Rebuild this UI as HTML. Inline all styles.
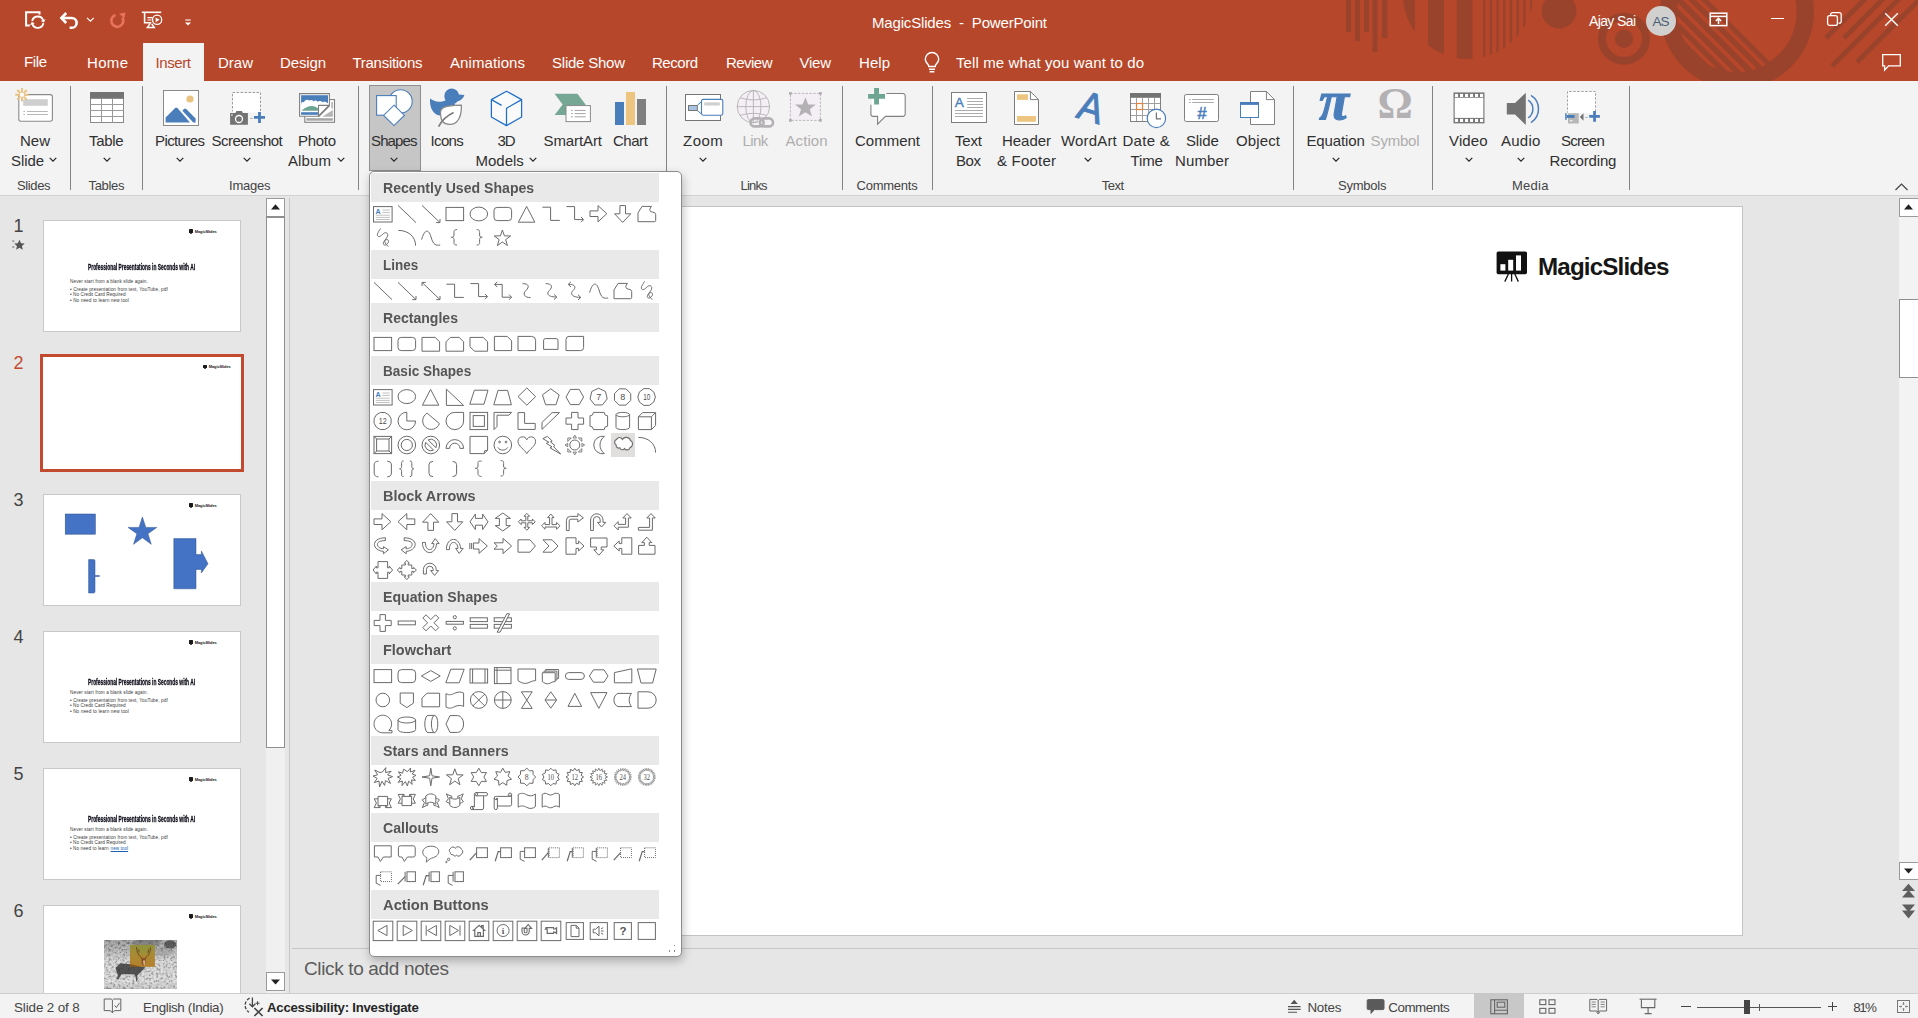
<!DOCTYPE html>
<html><head><meta charset="utf-8"><title>MagicSlides - PowerPoint</title>
<style>
html,body{margin:0;padding:0;}
body{width:1918px;height:1018px;overflow:hidden;position:relative;background:#e6e6e6;font-family:"Liberation Sans",sans-serif;}
#app{position:absolute;left:0;top:0;width:1918px;height:1018px;overflow:hidden;}
#app div,#app span,#app svg{position:absolute;}
#app span{white-space:pre;line-height:1;}
#app svg{overflow:visible;}
</style></head><body><div id="app">
<div style="left:0px;top:0px;width:1918px;height:81px;background:#b7472a;"></div>
<svg style="left:0;top:0;overflow:hidden" width="1918" height="81" viewBox="0 0 1918 81"><g fill="#9a432c"><rect x="1346" y="0" width="5" height="32"/><rect x="1355" y="0" width="5" height="41"/><rect x="1364" y="0" width="5" height="32"/><rect x="1372.5" y="0" width="5" height="52"/><rect x="1382" y="0" width="5.5" height="38"/><clipPath id="cc"><circle cx="1468" cy="-6.3" r="65.3"/></clipPath><g clip-path="url(#cc)"><rect x="1403" y="0" width="12" height="70"/><rect x="1428" y="0" width="16" height="70"/><rect x="1456.7" y="0" width="15.799999999999955" height="70"/><rect x="1483.0" y="0" width="2.4" height="70"/><rect x="1489.7" y="0" width="2.4" height="70"/><rect x="1496.4" y="0" width="2.4" height="70"/><rect x="1503.1" y="0" width="2.4" height="70"/><rect x="1509.8" y="0" width="2.4" height="70"/><rect x="1516.5" y="0" width="2.4" height="70"/><rect x="1523.2" y="0" width="2.4" height="70"/><rect x="1529.9" y="0" width="2.4" height="70"/></g><circle cx="1559" cy="11" r="17.5"/><circle cx="1624" cy="38.7" r="22" fill="none" stroke="#9a432c" stroke-width="8"/><circle cx="1624" cy="38.7" r="9.2"/><circle cx="1737" cy="12" r="68.25" fill="none" stroke="#9a432c" stroke-width="17.5"/><clipPath id="c2"><circle cx="1737" cy="12" r="60"/></clipPath><g clip-path="url(#c2)"><path d="M1600 -108 L1788 80 L1600 80Z"/><g stroke="#b7472a" stroke-width="3.8" fill="none"><line x1="1678.4" y1="-20" x2="1798.4" y2="100"/><line x1="1665.6" y1="-20" x2="1785.6" y2="100"/><line x1="1652" y1="-20" x2="1772" y2="100"/><line x1="1638.8" y1="-20" x2="1758.8" y2="100"/><line x1="1626" y1="-20" x2="1746" y2="100"/></g></g><g stroke="#9a432c" stroke-width="5" fill="none"><line x1="1826" y1="38" x2="1870" y2="-6"/><line x1="1844" y1="38" x2="1888" y2="-6"/><line x1="1832" y1="66" x2="1918" y2="-20"/><line x1="1857" y1="62" x2="1930" y2="-11"/></g></g></svg>
<div style="left:0px;top:81px;width:1918px;height:114px;background:#f3f3f3;"></div>
<div style="left:0px;top:195px;width:1918px;height:1px;background:#d2d2d2;"></div>
<div style="left:143px;top:43px;width:61px;height:38px;background:#f3f3f3;"></div>
<span style="left:872.00px;top:14.60px;font-size:15px;color:#ffffff;letter-spacing:-0.170px;">MagicSlides  -  PowerPoint</span>
<span style="left:24.00px;top:54.30px;font-size:15px;color:#ffffff;letter-spacing:-0.390px;">File</span>
<span style="left:87.00px;top:55.10px;font-size:15px;color:#ffffff;letter-spacing:0.329px;">Home</span>
<span style="left:218.00px;top:55.10px;font-size:15px;color:#ffffff;letter-spacing:-0.001px;">Draw</span>
<span style="left:280.00px;top:55.10px;font-size:15px;color:#ffffff;letter-spacing:-0.139px;">Design</span>
<span style="left:352.50px;top:55.10px;font-size:15px;color:#ffffff;letter-spacing:-0.281px;">Transitions</span>
<span style="left:450.00px;top:55.10px;font-size:15px;color:#ffffff;letter-spacing:0.088px;">Animations</span>
<span style="left:552.00px;top:55.10px;font-size:15px;color:#ffffff;letter-spacing:-0.227px;">Slide Show</span>
<span style="left:652.00px;top:55.10px;font-size:15px;color:#ffffff;letter-spacing:-0.471px;">Record</span>
<span style="left:726.00px;top:55.10px;font-size:15px;color:#ffffff;letter-spacing:-0.537px;">Review</span>
<span style="left:799.50px;top:55.10px;font-size:15px;color:#ffffff;letter-spacing:-0.248px;">View</span>
<span style="left:859.00px;top:55.10px;font-size:15px;color:#ffffff;letter-spacing:0.050px;">Help</span>
<span style="left:155.60px;top:55.10px;font-size:15px;color:#b7472a;letter-spacing:-0.423px;">Insert</span>
<span style="left:956.00px;top:55.10px;font-size:15px;color:#ffffff;letter-spacing:0.112px;">Tell me what you want to do</span>
<svg style="left:922px;top:51px;" width="20" height="24" viewBox="0 0 20 24"><g fill="none" stroke="#fff" stroke-width="1.4"><path d="M6.8 15.5 C6.8 13 3.3 11.8 3.3 8.2 A6.7 6.7 0 0 1 16.7 8.2 C16.7 11.8 13.2 13 13.2 15.5 Z"/><path d="M7 18.3h6M7.6 20.8h4.8"/></g></svg>
<span style="left:1589.00px;top:14.15px;font-size:14px;color:#ffffff;letter-spacing:-0.623px;">Ajay Sai</span>
<div style="left:1646px;top:6px;width:30px;height:30px;border-radius:50%;background:#d2d0ce"></div>
<span style="left:1652.50px;top:14.77px;font-size:13.5px;color:#4b5e78;letter-spacing:-1.010px;">AS</span>
<svg style="left:1709px;top:12px;" width="20" height="15" viewBox="0 0 20 15"><g fill="none" stroke="#fff" stroke-width="1.5"><rect x="1.2" y="1.2" width="16.6" height="12.4"/><path d="M1.2 4.4h16.6"/><path d="M9.5 12V6.6M6.8 9l2.7-2.6L12.2 9"/></g></svg>
<div style="left:1771px;top:17.5px;width:12.5px;height:1.3px;background:#fff;"></div>
<svg style="left:1826px;top:11px;" width="17" height="16" viewBox="0 0 17 16"><g fill="none" stroke="#fff" stroke-width="1.3"><rect x="1.6" y="4.6" width="9.8" height="9.8" rx="2"/><path d="M4.6 4.4V3.6a2 2 0 0 1 2-2h6.6a2 2 0 0 1 2 2v6.6a2 2 0 0 1-2 2h-.8"/></g></svg>
<svg style="left:1884px;top:12px;" width="16" height="16" viewBox="0 0 16 16"><path d="M1.2 1.2L13.8 13.8M13.8 1.2L1.2 13.8" stroke="#fff" stroke-width="1.4" fill="none"/></svg>
<svg style="left:1881px;top:53px;" width="22" height="20" viewBox="0 0 22 20"><path d="M1.7 1.7H19.3V12.8H7.6L3.6 17V12.8H1.7Z" fill="none" stroke="#fff" stroke-width="1.3" stroke-linejoin="miter"/></svg>
<svg style="left:23px;top:9px;" width="24" height="22" viewBox="0 0 24 22"><g fill="none" stroke="#fff" stroke-width="2"><path d="M6.8 16.6H3.1V3.2H16.5V5.6"/><path d="M9.19 12.21A5.7 5.7 0 0 1 20.16 11.25M20.41 14.19A5.7 5.7 0 0 1 9.44 15.15" stroke-width="1.9"/></g><path d="M20.9 13.5L22.6 10.2L17.7 12.1ZM8.7 12.9L7 16.2L11.9 14.3Z" fill="#fff"/></svg>
<svg style="left:59px;top:11px;" width="22" height="19" viewBox="0 0 22 19"><g fill="none" stroke="#fff" stroke-width="2.6" stroke-linejoin="miter"><path d="M7.2 2L2.4 7L7.2 12"/><path d="M3 7H12.7A4.9 4.9 0 0 1 12.7 16.8H10.6"/></g></svg>
<svg style="left:86px;top:16px;" width="9" height="8" viewBox="0 0 9 8"><path d="M1 1.8L4.4 5.2L7.8 1.8" fill="none" stroke="#fff" stroke-width="1.2"/></svg>
<svg style="left:108px;top:11px;" width="18" height="19" viewBox="0 0 18 19"><g fill="none" stroke="#e8735c" stroke-width="2.7"><path d="M7.6 4A6 6 0 1 0 14.4 6.6"/></g><path d="M11 2.7L17.4 1.4L16.4 7.6Z" fill="#e8735c"/></svg>
<svg style="left:141px;top:11px;" width="23" height="21" viewBox="0 0 23 21"><g fill="none" stroke="#fff" stroke-width="1.6"><path d="M0.8 1.3H20.2"/><path d="M3.6 1.6V11.8H10.4"/><path d="M6.4 6.6h5M6.4 9h4" stroke-width="1.2"/><circle cx="16.1" cy="8.8" r="4.6" stroke-width="1.3"/><path d="M9.2 12.4L6.4 16.4H13.2L10.8 13" stroke-width="1.5"/></g><path d="M14.6 6.4L18.6 8.8L14.6 11.2Z" fill="#fff"/></svg>
<svg style="left:184px;top:19px;" width="8" height="8" viewBox="0 0 8 8"><path d="M1.3 1h5.4" stroke="#fff" stroke-width="1.1"/><path d="M1 3.4h6L4 6.6Z" fill="#fff"/></svg>
<div style="left:70px;top:86px;width:1px;height:104px;background:#838383;"></div>
<div style="left:142px;top:86px;width:1px;height:104px;background:#838383;"></div>
<div style="left:358px;top:86px;width:1px;height:104px;background:#838383;"></div>
<div style="left:666px;top:86px;width:1px;height:104px;background:#838383;"></div>
<div style="left:842px;top:86px;width:1px;height:104px;background:#838383;"></div>
<div style="left:932px;top:86px;width:1px;height:104px;background:#838383;"></div>
<div style="left:1293px;top:86px;width:1px;height:104px;background:#838383;"></div>
<div style="left:1432px;top:86px;width:1px;height:104px;background:#838383;"></div>
<div style="left:1629px;top:86px;width:1px;height:104px;background:#838383;"></div>
<div style="left:369px;top:84.5px;width:52px;height:86.5px;background:#c6c6c6;box-sizing:border-box;border:1px solid #8f8f8f;"></div>
<span style="left:20.00px;top:132.90px;font-size:15px;color:#303030;letter-spacing:-0.004px;">New</span>
<span style="left:11.00px;top:152.90px;font-size:15px;color:#303030;letter-spacing:-0.089px;">Slide</span>
<svg style="left:48.5px;top:157px;" width="8" height="6" viewBox="0 0 8 6"><path d="M0.7 0.9L4 4.2L7.3 0.9" fill="none" stroke="#262626" stroke-width="1.25"/></svg>
<span style="left:89.00px;top:132.90px;font-size:15px;color:#303030;letter-spacing:-0.290px;">Table</span>
<svg style="left:102.5px;top:157px;" width="8" height="6" viewBox="0 0 8 6"><path d="M0.7 0.9L4 4.2L7.3 0.9" fill="none" stroke="#262626" stroke-width="1.25"/></svg>
<span style="left:155.00px;top:132.90px;font-size:15px;color:#303030;letter-spacing:-0.598px;">Pictures</span>
<svg style="left:176px;top:157px;" width="8" height="6" viewBox="0 0 8 6"><path d="M0.7 0.9L4 4.2L7.3 0.9" fill="none" stroke="#262626" stroke-width="1.25"/></svg>
<span style="left:211.50px;top:132.90px;font-size:15px;color:#303030;letter-spacing:-0.520px;">Screenshot</span>
<svg style="left:243px;top:157px;" width="8" height="6" viewBox="0 0 8 6"><path d="M0.7 0.9L4 4.2L7.3 0.9" fill="none" stroke="#262626" stroke-width="1.25"/></svg>
<span style="left:298.00px;top:132.90px;font-size:15px;color:#303030;letter-spacing:-0.300px;">Photo</span>
<span style="left:288.00px;top:152.90px;font-size:15px;color:#303030;letter-spacing:0.120px;">Album</span>
<svg style="left:336.5px;top:157px;" width="8" height="6" viewBox="0 0 8 6"><path d="M0.7 0.9L4 4.2L7.3 0.9" fill="none" stroke="#262626" stroke-width="1.25"/></svg>
<span style="left:371.00px;top:132.90px;font-size:15px;color:#303030;letter-spacing:-0.875px;">Shapes</span>
<svg style="left:390px;top:157px;" width="8" height="6" viewBox="0 0 8 6"><path d="M0.7 0.9L4 4.2L7.3 0.9" fill="none" stroke="#262626" stroke-width="1.25"/></svg>
<span style="left:430.60px;top:132.90px;font-size:15px;color:#303030;letter-spacing:-0.663px;">Icons</span>
<span style="left:497.50px;top:132.90px;font-size:15px;color:#303030;letter-spacing:-1.075px;">3D</span>
<span style="left:475.60px;top:152.90px;font-size:15px;color:#303030;letter-spacing:-0.031px;">Models</span>
<svg style="left:528.5px;top:157px;" width="8" height="6" viewBox="0 0 8 6"><path d="M0.7 0.9L4 4.2L7.3 0.9" fill="none" stroke="#262626" stroke-width="1.25"/></svg>
<span style="left:543.50px;top:132.90px;font-size:15px;color:#303030;letter-spacing:-0.096px;">SmartArt</span>
<span style="left:613.00px;top:132.90px;font-size:15px;color:#303030;letter-spacing:-0.470px;">Chart</span>
<span style="left:683.00px;top:132.90px;font-size:15px;color:#303030;letter-spacing:0.485px;">Zoom</span>
<svg style="left:698.5px;top:157px;" width="8" height="6" viewBox="0 0 8 6"><path d="M0.7 0.9L4 4.2L7.3 0.9" fill="none" stroke="#262626" stroke-width="1.25"/></svg>
<span style="left:742.50px;top:132.90px;font-size:15px;color:#b0aeae;letter-spacing:-0.573px;">Link</span>
<span style="left:785.50px;top:132.90px;font-size:15px;color:#b0aeae;letter-spacing:0.082px;">Action</span>
<span style="left:855.00px;top:132.90px;font-size:15px;color:#303030;letter-spacing:-0.003px;">Comment</span>
<span style="left:955.00px;top:132.90px;font-size:15px;color:#303030;letter-spacing:-0.170px;">Text</span>
<span style="left:956.00px;top:152.90px;font-size:15px;color:#303030;letter-spacing:-0.424px;">Box</span>
<span style="left:1002.00px;top:132.90px;font-size:15px;color:#303030;letter-spacing:-0.040px;">Header</span>
<span style="left:997.00px;top:152.90px;font-size:15px;color:#303030;letter-spacing:0.211px;">&amp; Footer</span>
<span style="left:1061.00px;top:132.90px;font-size:15px;color:#303030;letter-spacing:0.161px;">WordArt</span>
<svg style="left:1084px;top:157px;" width="8" height="6" viewBox="0 0 8 6"><path d="M0.7 0.9L4 4.2L7.3 0.9" fill="none" stroke="#262626" stroke-width="1.25"/></svg>
<span style="left:1122.50px;top:132.90px;font-size:15px;color:#303030;letter-spacing:0.288px;">Date &amp;</span>
<span style="left:1130.60px;top:152.90px;font-size:15px;color:#303030;letter-spacing:-0.192px;">Time</span>
<span style="left:1186.00px;top:132.90px;font-size:15px;color:#303030;letter-spacing:-0.139px;">Slide</span>
<span style="left:1175.00px;top:152.90px;font-size:15px;color:#303030;letter-spacing:0.130px;">Number</span>
<span style="left:1236.00px;top:132.90px;font-size:15px;color:#303030;letter-spacing:0.130px;">Object</span>
<span style="left:1306.40px;top:132.90px;font-size:15px;color:#303030;letter-spacing:-0.117px;">Equation</span>
<svg style="left:1331.5px;top:157px;" width="8" height="6" viewBox="0 0 8 6"><path d="M0.7 0.9L4 4.2L7.3 0.9" fill="none" stroke="#262626" stroke-width="1.25"/></svg>
<span style="left:1370.60px;top:132.90px;font-size:15px;color:#b0aeae;letter-spacing:-0.204px;">Symbol</span>
<span style="left:1449.00px;top:132.90px;font-size:15px;color:#303030;letter-spacing:0.151px;">Video</span>
<svg style="left:1464.5px;top:157px;" width="8" height="6" viewBox="0 0 8 6"><path d="M0.7 0.9L4 4.2L7.3 0.9" fill="none" stroke="#262626" stroke-width="1.25"/></svg>
<span style="left:1501.00px;top:132.90px;font-size:15px;color:#303030;letter-spacing:0.258px;">Audio</span>
<svg style="left:1516.5px;top:157px;" width="8" height="6" viewBox="0 0 8 6"><path d="M0.7 0.9L4 4.2L7.3 0.9" fill="none" stroke="#262626" stroke-width="1.25"/></svg>
<span style="left:1561.00px;top:132.90px;font-size:15px;color:#303030;letter-spacing:-0.746px;">Screen</span>
<span style="left:1549.50px;top:152.90px;font-size:15px;color:#303030;letter-spacing:-0.184px;">Recording</span>
<span style="left:17.00px;top:178.80px;font-size:13px;color:#444444;letter-spacing:-0.362px;">Slides</span>
<span style="left:88.50px;top:178.80px;font-size:13px;color:#444444;letter-spacing:-0.316px;">Tables</span>
<span style="left:229.00px;top:178.80px;font-size:13px;color:#444444;letter-spacing:-0.206px;">Images</span>
<span style="left:740.60px;top:178.80px;font-size:13px;color:#444444;letter-spacing:-0.837px;">Links</span>
<span style="left:856.60px;top:178.80px;font-size:13px;color:#444444;letter-spacing:-0.250px;">Comments</span>
<span style="left:1101.70px;top:178.80px;font-size:13px;color:#444444;letter-spacing:-0.514px;">Text</span>
<span style="left:1338.00px;top:178.80px;font-size:13px;color:#444444;letter-spacing:-0.225px;">Symbols</span>
<span style="left:1512.00px;top:178.80px;font-size:13px;color:#444444;letter-spacing:0.273px;">Media</span>
<svg style="left:1894px;top:182px;" width="15" height="10" viewBox="0 0 15 10"><path d="M1.5 8L7.5 2L13.5 8" fill="none" stroke="#444" stroke-width="1.2"/></svg>
<svg style="left:12px;top:86px;" width="44" height="38" viewBox="0 0 44 38"><rect x="6.8" y="8.6" width="33.6" height="26.6" rx="2.2" fill="#fff" stroke="#8a8a8a" stroke-width="1.1"/>
<rect x="11.2" y="13.2" width="24.6" height="6.6" fill="#cfcfcf"/>
<path d="M11.4 25.5h1.6M15 25.5h20.8M11.4 28.5h1.6M15 28.5h20.8" stroke="#b0b0b0" stroke-width="0.9"/>
<g stroke="#eac282" stroke-width="1.9"><path d="M10 2v13.6M3.2 8.8h13.6M5.2 4l9.6 9.6M14.8 4L5.2 13.6"/></g><circle cx="10" cy="8.8" r="2.2" fill="#fbfbfb"/></svg>
<svg style="left:90px;top:92px;" width="34" height="31" viewBox="0 0 34 31"><rect x="0.5" y="0.5" width="33" height="30" fill="#fff" stroke="#8a8a8a"/><rect x="0" y="0" width="34" height="6.8" fill="#737373"/>
<path d="M0.5 12.5h33M0.5 18.5h33M0.5 24.5h33M11.5 7v23.5M22.5 7v23.5" stroke="#9a9a9a" stroke-width="1"/></svg>
<svg style="left:163px;top:90px;" width="36" height="36" viewBox="0 0 36 36"><rect x="0.5" y="0.5" width="35" height="35" fill="#fff" stroke="#8a8a8a"/><circle cx="27" cy="9" r="3.6" fill="#eac282"/>
<path d="M2.6 32.6V27.4L12.4 17.8L14.2 17.8L27 32.6Z" fill="#4a7ebb"/><path d="M19.4 20.8L21.2 18.8L23 18.8L32.6 28.4V32.6H30.2Z" fill="#4a7ebb"/></svg>
<svg style="left:229px;top:91px;" width="38" height="35" viewBox="0 0 38 35"><rect x="3.5" y="1.5" width="28" height="20" fill="#fff"/><path d="M3.5 20.4V1.5H31.5V20.4" fill="none" stroke="#9c9c9c" stroke-width="1" stroke-dasharray="2.4 1.6" stroke-dashoffset="1"/>
<path d="M1.1 22H6.4L7.4 20H12.9L13.9 22H18.9V33.8H1.1Z" fill="#737373"/><circle cx="10" cy="28" r="3.5" fill="#737373" stroke="#fff" stroke-width="1.3"/><rect x="2.3" y="23.3" width="1.3" height="1.3" fill="#fff"/>
<path d="M21.2 27.4h2.8" stroke="#a8a8a8" stroke-width="0.9"/><path d="M30.5 21v10.9M25 26.45h11" stroke="#4a7ebb" stroke-width="2.8"/></svg>
<svg style="left:298px;top:92px;" width="38" height="32" viewBox="0 0 38 32"><rect x="6.8" y="7.6" width="29.7" height="22.7" fill="#fff" stroke="#808080" stroke-width="1.1"/>
<rect x="8.3" y="26.2" width="26.6" height="2.5" fill="#a6a6a6"/><rect x="33.3" y="10" width="1.6" height="6.5" fill="#b4b4b4"/><path d="M24.2 24.7L34.9 18.1V24.7Z" fill="#b4b4b4"/>
<path d="M1.6 1.6H31.4V13.4L20.5 24.3H1.6Z" fill="#fff" stroke="#808080" stroke-width="1.1"/><rect x="3.1" y="3.2" width="26.9" height="9.8" fill="#4a7ebb"/>
<path d="M3.1 11.4C4 9.6 5.4 9.8 6 10.4C6.6 7.6 9.6 6.8 11.4 8.6C12.6 7.6 14.6 7.8 15.4 9.4C16.4 8.2 18.6 8.2 19.4 9.8C21 8.6 23.4 8.8 24.4 10.2C26 9.4 28.6 9.6 30 11.4V13.4H3.1Z" fill="#fff"/>
<path d="M3.3 18.7C6.6 16 10.6 14 13.6 14C16.4 14 18.6 15.4 20.4 16.6V18.7Z" fill="#6ea592"/><rect x="3.1" y="20.2" width="17.2" height="2.6" fill="#4a7ebb"/>
<path d="M20.5 24.3V13.4H31.4Z" fill="#fff" stroke="#808080" stroke-width="1.1" stroke-linejoin="round"/><path d="M31.2 13.6L20.7 24.1" stroke="#808080" stroke-width="1.5"/></svg>
<svg style="left:375px;top:88px;" width="40" height="40" viewBox="0 0 40 40"><circle cx="25.6" cy="13.4" r="11.6" fill="#fff" stroke="#4a7ebb" stroke-width="1.1"/>
<rect x="1.6" y="7.6" width="19.6" height="19.6" fill="#fff" stroke="#4a7ebb" stroke-width="1.1"/>
<path d="M19 17.2L29.4 27.4L19 37.6L8.6 27.4Z" fill="#fff" stroke="#4a7ebb" stroke-width="1.1"/></svg>
<svg style="left:428px;top:88px;" width="38" height="40" viewBox="0 0 38 40"><path d="M2 10.6C6.4 14.2 12.4 14.6 17.6 12.2C16.6 10.8 16.4 9.2 16.4 7.66A7.3 7.3 0 0 1 30.9 6.6L36.4 7C35.8 10 33 12.4 29.4 13.4C28.4 14.6 27.4 15.4 26.4 15.8L27.4 17.4C20 18.6 14 20 12.6 27.6C6 27.4 1.4 21 2 10.6Z" fill="#4a7ebb"/>
<path d="M33.4 17.2C33.6 24 32 30.6 28.5 34C26.4 36 24 36.6 21.5 36.4C18.6 36.2 16.2 35.4 15 34C13.4 32.4 12.6 30 12.5 24.2C12.6 21.8 14 20.2 16.1 19.3C20 17.8 27 17.4 33.4 17.2Z" fill="#fff" stroke="#8a8a8a" stroke-width="1.3" stroke-linejoin="round"/>
<path d="M25.6 24.5C19 27.6 14 32 10.6 38.6" fill="none" stroke="#7c7c7c" stroke-width="1.7"/></svg>
<svg style="left:490px;top:90px;" width="33" height="37" viewBox="0 0 33 37"><g fill="#fafafa" stroke="#1e6fc9" stroke-width="1.25" stroke-linejoin="round"><path d="M16.5 1.2L31.6 9.6V27L16.5 35.6L1.4 27V9.6Z"/><path d="M31.6 9.6L16.5 18.2V35.6M1.4 9.6L11.6 15.4" fill="none"/></g></svg>
<svg style="left:554px;top:93px;" width="38" height="30" viewBox="0 0 38 30"><path d="M0.6 0.8H23.4L31.6 11.4L23.4 22H0.6L8.6 11.4Z" fill="#75a794"/>
<rect x="12" y="12.6" width="24.4" height="16" fill="#fff" stroke="#8a8a8a" stroke-width="1"/><path d="M17 17.4h1.8M20.6 17.4h11M17 20.6h1.8M20.6 20.6h11M17 23.8h1.8M20.6 23.8h11" stroke="#9a9a9a" stroke-width="0.9"/></svg>
<div style="left:614.7px;top:102px;width:9px;height:22.7px;background:#4a7ebb;"></div>
<div style="left:625.7px;top:92px;width:9px;height:32.7px;background:#edc581;"></div>
<div style="left:636.9px;top:99px;width:8.8px;height:25.7px;background:#7f7f7f;"></div>
<svg style="left:684px;top:93px;" width="40" height="29" viewBox="0 0 40 29"><rect x="1.5" y="1.5" width="35" height="26" fill="#fff" stroke="#757575" stroke-width="1"/>
<path d="M13.3 12.3L17.5 8.6M13.3 17.5L17.5 21" stroke="#4a7ebb" stroke-width="1"/><rect x="4.5" y="12.5" width="8.8" height="5" fill="#a9c4e4" stroke="#757575" stroke-width="1"/>
<rect x="17.5" y="6.4" width="21.3" height="15.8" rx="1.6" fill="#fff" stroke="#4a7ebb" stroke-width="1.1"/><rect x="20.2" y="9.4" width="15.6" height="3.1" fill="#cfcfcf"/></svg>
<svg style="left:736px;top:89px;" width="40" height="40" viewBox="0 0 40 40"><g fill="#f4eff4" stroke="#b4b1b4" stroke-width="0.9"><circle cx="17.4" cy="17.6" r="16.2"/><ellipse cx="17.4" cy="17.6" rx="7.6" ry="16.2" fill="none"/><path d="M17.4 1.4v32.4M1.2 17.6h32.4M4 8.6C12 11.6 23 11.6 30.8 8.6M4 26.6C12 23.6 23 23.6 30.8 26.6" fill="none"/></g>
<g fill="none" stroke="#b4b1b4" stroke-width="2.6"><rect x="14.6" y="29.4" width="13" height="8" rx="4"/><rect x="24" y="29.4" width="13" height="8" rx="4"/></g></svg>
<svg style="left:788px;top:91px;" width="35" height="32" viewBox="0 0 35 32"><rect x="2.4" y="2.4" width="30" height="27" fill="#f4eff4" stroke="#b4b1b4" stroke-width="0.9" stroke-dasharray="2.4 1.4"/>
<g fill="#b4b1b4"><rect x="1" y="1" width="2.8" height="2.8"/><rect x="31" y="1" width="2.8" height="2.8"/><rect x="1" y="28" width="2.8" height="2.8"/><rect x="31" y="28" width="2.8" height="2.8"/>
<path d="M17.4 6.2L20.2 13.6H27.8L21.8 18.2L24 25.6L17.4 21.2L10.8 25.6L13 18.2L7 13.6H14.6Z"/></g></svg>
<svg style="left:866px;top:86px;" width="42" height="40" viewBox="0 0 42 40"><path d="M4.9 9.9A2.4 2.4 0 0 1 7.3 7.5H36.8A2.4 2.4 0 0 1 39.2 9.9V28A2.4 2.4 0 0 1 36.8 30.4H19.4L11.6 38.2V30.4H7.3A2.4 2.4 0 0 1 4.9 28Z" fill="#fff" stroke="#808080" stroke-width="1.1"/>
<path d="M4.9 18.8V7.5H20.4" fill="none" stroke="#f3f3f3" stroke-width="2.4"/><rect x="6.1" y="8.7" width="14.3" height="10.1" fill="#fff"/>
<path d="M10.55 2.1v16.5M2.1 10.35h16.9" stroke="#6ea592" stroke-width="4.9"/></svg>
<svg style="left:950px;top:91px;" width="38" height="32" viewBox="0 0 38 32"><rect x="1.5" y="1.5" width="35" height="30" fill="#fff" stroke="#7d7d7d" stroke-width="1"/>
<path d="M17.2 7.5h15.8M17.2 10.5h15.8M17.2 13.5h15.8M17.2 16.5h15.8M5 19.5h28M5 22.5h28M5 25.5h28" stroke="#a0a0a0" stroke-width="0.9"/></svg>
<span style="left:954.80px;top:96.49px;font-size:13.6px;color:#4a7ebb;letter-spacing:0.528px;-webkit-text-stroke:0.35px #4a7ebb;">A</span>
<svg style="left:1013px;top:90px;" width="27" height="36" viewBox="0 0 27 36"><path d="M1.5 1.5H17.4L25.5 9.6V34.5H1.5Z" fill="#fff" stroke="#7d7d7d" stroke-width="1"/><path d="M17.4 1.5V9.6H25.5" fill="none" stroke="#7d7d7d" stroke-width="1"/>
<rect x="4" y="4.3" width="11" height="5.6" fill="#edc581"/><rect x="4" y="26" width="18.9" height="5.8" fill="#edc581"/></svg>
<span style="left:1075.7px;top:87.1px;font-size:41px;color:#4a7ebb;-webkit-text-stroke:1px #4a7ebb;transform:rotate(17deg) scaleX(0.92);transform-origin:50% 60%;">A</span>
<svg style="left:1129px;top:92px;" width="38" height="37" viewBox="0 0 38 37"><rect x="1.5" y="1.5" width="30" height="28" fill="#fff" stroke="#808080" stroke-width="1"/><rect x="1" y="1" width="31" height="4.8" fill="#737373"/>
<path d="M2 11.5h29M2 17.5h29M2 23.5h29M7.5 6v23M13.5 6v23M19.5 6v23M25.5 6v23" stroke="#a0a0a0" stroke-width="1"/>
<rect x="7.5" y="11.5" width="6" height="6" fill="#fff" stroke="#e8823a" stroke-width="1.2"/>
<circle cx="27.4" cy="26.4" r="9.2" fill="#fff" stroke="#4a7ebb" stroke-width="1.2"/><path d="M27.4 20.6V26.9H32" fill="none" stroke="#737373" stroke-width="1.2"/></svg>
<svg style="left:1183px;top:93px;" width="37" height="30" viewBox="0 0 37 30"><rect x="1.5" y="1.5" width="34" height="27" rx="1.8" fill="#fff" stroke="#808080" stroke-width="1"/><path d="M6 6.5h1.8M9.2 6.5h21.6M6 9.5h1.8M9.2 9.5h21.6" stroke="#a0a0a0" stroke-width="0.9"/></svg>
<span style="left:1197.20px;top:105.00px;font-size:16.3px;color:#4a7ebb;letter-spacing:1.334px;font-style:italic;-webkit-text-stroke:0.5px #4a7ebb;">#</span>
<svg style="left:1239px;top:90px;" width="37" height="36" viewBox="0 0 37 36"><path d="M11.5 1.5H27.4L35.5 9.6V34.5H11.5Z" fill="#fff" stroke="#808080" stroke-width="1"/><path d="M27.4 1.5V9.6H35.5" fill="none" stroke="#808080" stroke-width="1"/>
<rect x="1.5" y="12.5" width="18" height="15" fill="#fff" stroke="#4a7ebb" stroke-width="1"/><rect x="1" y="12" width="19" height="2.9" fill="#4a7ebb"/></svg>
<span style="left:1319px;top:72.8px;font-family:'Liberation Serif',serif;font-style:italic;font-weight:bold;font-size:55px;color:#4a7ebb;-webkit-text-stroke:1.1px #4a7ebb;">π</span>
<span style="left:1377.5px;top:81.8px;font-family:'Liberation Serif',serif;font-size:44px;font-weight:bold;color:#b4b1b4;">Ω</span>
<svg style="left:1453px;top:92px;" width="32" height="32" viewBox="0 0 32 32"><rect x="1.1" y="1" width="29.8" height="29.8" fill="#fff" stroke="#737373" stroke-width="1.1"/><rect x="1.1" y="1" width="29.8" height="4.7" fill="#737373"/><rect x="1.1" y="25.9" width="29.8" height="4.9" fill="#737373"/>
<g fill="#fff"><rect x="2.00" y="1.9" width="3.1" height="3.1"/><rect x="2.00" y="26.9" width="3.1" height="3.1"/><rect x="7.00" y="1.9" width="3.1" height="3.1"/><rect x="7.00" y="26.9" width="3.1" height="3.1"/><rect x="12.00" y="1.9" width="3.1" height="3.1"/><rect x="12.00" y="26.9" width="3.1" height="3.1"/><rect x="17.00" y="1.9" width="3.1" height="3.1"/><rect x="17.00" y="26.9" width="3.1" height="3.1"/><rect x="22.00" y="1.9" width="3.1" height="3.1"/><rect x="22.00" y="26.9" width="3.1" height="3.1"/><rect x="27.00" y="1.9" width="3.1" height="3.1"/><rect x="27.00" y="26.9" width="3.1" height="3.1"/></g></svg>
<svg style="left:1505px;top:92px;" width="36" height="34" viewBox="0 0 36 34"><path d="M1.8 10.9H10L20.8 0.75V32.9L10 22.6H1.8Z" fill="#737373"/><path d="M23.2 8.1A10.8 10.8 0 0 1 23.2 25.9M26 3.4A16.1 16.1 0 0 1 26 30.6" fill="none" stroke="#4a7ebb" stroke-width="1.5"/></svg>
<svg style="left:1564px;top:90px;" width="38" height="35" viewBox="0 0 38 35"><rect x="3.5" y="1.5" width="28" height="21.6" fill="#fff"/><path d="M3.5 22.7V1.5H31.5V22.7" fill="none" stroke="#a2a2a2" stroke-width="1" stroke-dasharray="2.4 1.6" stroke-dashoffset="1"/>
<rect x="4" y="23.2" width="10.8" height="10.3" fill="#b7b7b7"/><rect x="1.2" y="23.2" width="1.5" height="6.6" fill="#4a7ebb"/><rect x="2.6" y="25" width="8" height="2.9" fill="#4a7ebb"/><rect x="6" y="30.2" width="2.4" height="1" fill="#fff"/>
<path d="M15.8 27L19.5 23.2V30.7Z" fill="#737373"/><path d="M21.2 27.4h2.5" stroke="#a8a8a8" stroke-width="0.9"/><path d="M30.55 21.1v10.7M25.2 26.45h10.7" stroke="#4a7ebb" stroke-width="2.8"/></svg>
<div style="left:43px;top:220px;width:198px;height:112px;background:#fff;box-sizing:border-box;border:1px solid #c8c8c8;"></div>
<span style="left:13.5px;top:216.8px;font-size:18px;color:#444;">1</span>
<div style="left:188.79999999999998px;top:229.3px;width:4.4px;height:3.6px;background:#1a1a1a;border-radius:0.5px;"></div>
<div style="left:190.2px;top:232.9px;width:1.6px;height:1.0px;background:#555;"></div>
<span style="left:194.79999999999998px;top:229.6px;font-size:4.0px;font-weight:bold;color:#222;letter-spacing:-0.12px;">MagicSlides</span>
<span style="left:88px;top:264.2px;font-size:8.2px;font-weight:bold;color:#0d0d1a;-webkit-text-stroke:0.3px #0d0d1a;transform:scaleX(0.594);transform-origin:left top;letter-spacing:0px;">Professional Presentations in Seconds with AI</span>
<span style="left:70px;top:279.50px;font-size:4.7px;color:#3a3a3a;letter-spacing:0.077px;">Never start from a blank slide again.</span>
<span style="left:70px;top:287.70px;font-size:4.7px;color:#3a3a3a;letter-spacing:0.092px;">• Create presentation from text, YouTube, pdf</span>
<span style="left:70px;top:292.70px;font-size:4.7px;color:#3a3a3a;letter-spacing:0.043px;">• No Credit Card Required</span>
<span style="left:70px;top:298.70px;font-size:4.7px;color:#3a3a3a;letter-spacing:0.096px;">• No need to learn new tool</span>
<svg style="left:12px;top:239px;" width="13" height="11.3" viewBox="0 0 15 13"><path d="M8.6 0.8L10.5 4.9L14.6 5.3L11.5 8.2L12.4 12.4L8.6 10.2L4.8 12.4L5.7 8.2L2.6 5.3L6.7 4.9Z" fill="#555"/><path d="M0.4 2.4h2.2M0.4 9.2h2.2" stroke="#555" stroke-width="1.1"/></svg>
<div style="left:40px;top:354px;width:204px;height:118px;background:#fff;box-sizing:border-box;border:3px solid #c24a2e;"></div>
<span style="left:13.5px;top:353.8px;font-size:18px;color:#c24a2e;">2</span>
<div style="left:202.79999999999998px;top:364.5px;width:4.4px;height:3.6px;background:#1a1a1a;border-radius:0.5px;"></div>
<div style="left:204.2px;top:368.09999999999997px;width:1.6px;height:1.0px;background:#555;"></div>
<span style="left:208.79999999999998px;top:364.8px;font-size:4.0px;font-weight:bold;color:#222;letter-spacing:-0.12px;">MagicSlides</span>
<div style="left:43px;top:494px;width:198px;height:112px;background:#fff;box-sizing:border-box;border:1px solid #c8c8c8;"></div>
<span style="left:13.5px;top:490.8px;font-size:18px;color:#444;">3</span>
<div style="left:188.79999999999998px;top:503.3px;width:4.4px;height:3.6px;background:#1a1a1a;border-radius:0.5px;"></div>
<div style="left:190.2px;top:506.9px;width:1.6px;height:1.0px;background:#555;"></div>
<span style="left:194.79999999999998px;top:503.6px;font-size:4.0px;font-weight:bold;color:#222;letter-spacing:-0.12px;">MagicSlides</span>
<svg style="left:43px;top:494px;" width="198" height="112" viewBox="0 0 198 112"><g fill="#4472c4" stroke="#2f528f" stroke-width="0.5"><rect x="22.2" y="20" width="30.2" height="20.2"/>
<path d="M99.4 23L102.8 33.4H113.8L104.9 39.8L108.3 50.3L99.4 43.8L90.5 50.3L93.9 39.8L85 33.4H96Z"/>
<path d="M130.8 44.6H153V60.6H158.4V57L165 69.8L158.4 79V75.4H153V94.8H130.8Z"/>
<path d="M45.6 65.6H50.6Q52 65.6 52 67V81.6H56.4V82.4H52V97.6Q52 99 50.6 99H45.6Z"/></g></svg>
<div style="left:43px;top:631px;width:198px;height:112px;background:#fff;box-sizing:border-box;border:1px solid #c8c8c8;"></div>
<span style="left:13.5px;top:627.8px;font-size:18px;color:#444;">4</span>
<div style="left:188.79999999999998px;top:640.3px;width:4.4px;height:3.6px;background:#1a1a1a;border-radius:0.5px;"></div>
<div style="left:190.2px;top:643.9px;width:1.6px;height:1.0px;background:#555;"></div>
<span style="left:194.79999999999998px;top:640.6px;font-size:4.0px;font-weight:bold;color:#222;letter-spacing:-0.12px;">MagicSlides</span>
<span style="left:88px;top:679.2px;font-size:8.2px;font-weight:bold;color:#0d0d1a;-webkit-text-stroke:0.3px #0d0d1a;transform:scaleX(0.594);transform-origin:left top;letter-spacing:0px;">Professional Presentations in Seconds with AI</span>
<span style="left:70px;top:690.50px;font-size:4.7px;color:#3a3a3a;letter-spacing:0.077px;">Never start from a blank slide again.</span>
<span style="left:70px;top:698.70px;font-size:4.7px;color:#3a3a3a;letter-spacing:0.092px;">• Create presentation from text, YouTube, pdf</span>
<span style="left:70px;top:703.70px;font-size:4.7px;color:#3a3a3a;letter-spacing:0.043px;">• No Credit Card Required</span>
<span style="left:70px;top:709.70px;font-size:4.7px;color:#3a3a3a;letter-spacing:0.096px;">• No need to learn new tool</span>
<div style="left:43px;top:768px;width:198px;height:112px;background:#fff;box-sizing:border-box;border:1px solid #c8c8c8;"></div>
<span style="left:13.5px;top:764.8px;font-size:18px;color:#444;">5</span>
<div style="left:188.79999999999998px;top:777.3px;width:4.4px;height:3.6px;background:#1a1a1a;border-radius:0.5px;"></div>
<div style="left:190.2px;top:780.9px;width:1.6px;height:1.0px;background:#555;"></div>
<span style="left:194.79999999999998px;top:777.6px;font-size:4.0px;font-weight:bold;color:#222;letter-spacing:-0.12px;">MagicSlides</span>
<span style="left:88px;top:816.2px;font-size:8.2px;font-weight:bold;color:#0d0d1a;-webkit-text-stroke:0.3px #0d0d1a;transform:scaleX(0.594);transform-origin:left top;letter-spacing:0px;">Professional Presentations in Seconds with AI</span>
<span style="left:70px;top:827.50px;font-size:4.7px;color:#3a3a3a;letter-spacing:0.077px;">Never start from a blank slide again.</span>
<span style="left:70px;top:835.70px;font-size:4.7px;color:#3a3a3a;letter-spacing:0.092px;">• Create presentation from text, YouTube, pdf</span>
<span style="left:70px;top:840.70px;font-size:4.7px;color:#3a3a3a;letter-spacing:0.043px;">• No Credit Card Required</span>
<span style="left:70px;top:846.70px;font-size:4.7px;color:#3a3a3a;letter-spacing:0.055px;">• No need to learn </span>
<span style="left:110.6px;top:846.70px;font-size:4.7px;color:#1a5fb4;text-decoration:underline;">new tool</span>
<div style="left:43px;top:905px;width:198px;height:112px;background:#fff;box-sizing:border-box;border:1px solid #c8c8c8;"></div>
<span style="left:13.5px;top:901.8px;font-size:18px;color:#444;">6</span>
<div style="left:188.79999999999998px;top:914.3px;width:4.4px;height:3.6px;background:#1a1a1a;border-radius:0.5px;"></div>
<div style="left:190.2px;top:917.9px;width:1.6px;height:1.0px;background:#555;"></div>
<span style="left:194.79999999999998px;top:914.6px;font-size:4.0px;font-weight:bold;color:#222;letter-spacing:-0.12px;">MagicSlides</span>
<svg style="left:104px;top:940px;overflow:hidden;" width="73" height="49" viewBox="0 0 73 49"><defs><linearGradient id="dg" x1="0" y1="0" x2="0" y2="1"><stop offset="0" stop-color="#8c8c8c"/><stop offset="0.2" stop-color="#ababab"/><stop offset="0.42" stop-color="#d2d2d2"/><stop offset="0.85" stop-color="#dadada"/><stop offset="1" stop-color="#c2c2c2"/></linearGradient>
<linearGradient id="og" x1="0" y1="0" x2="0" y2="1"><stop offset="0" stop-color="#93913a"/><stop offset="0.45" stop-color="#a98a35"/><stop offset="1" stop-color="#b5812c"/></linearGradient>
<filter id="nz" x="0" y="0" width="100%" height="100%"><feTurbulence type="fractalNoise" baseFrequency="0.42" numOctaves="3" seed="11"/><feColorMatrix type="matrix" values="2.4 0 0 0 -0.7  2.4 0 0 0 -0.7  2.4 0 0 0 -0.7  0 0 0 0 1"/></filter></defs>
<rect width="73" height="49" fill="url(#dg)"/><rect width="73" height="49" filter="url(#nz)" opacity="0.26"/>
<ellipse cx="66" cy="4.5" rx="6" ry="4" fill="#3a3a3a" opacity="0.7"/><ellipse cx="42" cy="3" rx="14" ry="3.4" fill="#5a5a5a" opacity="0.45"/><ellipse cx="58" cy="12" rx="12" ry="4" fill="#8a8a8a" opacity="0.35"/>
<path d="M16.3 23.3L11.6 27.7L12.2 30.6L13.9 35.4L12.8 38.9L14.3 39.5L17.5 34.2H29.9L31.6 36.5L32.2 41.2H33.1L33.4 35.4L38.7 30L41.1 27.1L26.1 24.2Z" fill="#333" opacity="0.82"/>
<rect x="26" y="4.9" width="24.9" height="21.9" fill="url(#og)"/><ellipse cx="40" cy="10" rx="8" ry="4.4" fill="#86a03a" opacity="0.3"/>
<path d="M32.6 7C32.4 12 35 16.4 38.4 18.4M46.4 7.4C46.8 12 44 16.4 40.8 18.4M34.6 9L35.2 12.6M44.6 9.4L44 12.8" fill="none" stroke="#6a3f1e" stroke-width="0.9"/>
<path d="M37.2 18H42L41.4 23.6L39.4 26.6L37.8 24Z" fill="#8a5226"/><path d="M39 20.4L41.2 20.6L40.8 25L39.6 25.6Z" fill="#d8b48a"/>
<path d="M26 24.2L38 26.8H26Z" fill="#7a4a1c" opacity="0.9"/></svg>
<div style="left:266px;top:198px;width:19px;height:795px;background:#f0f0f0;"></div>
<div style="left:266px;top:198px;width:19px;height:19px;background:#fff;box-sizing:border-box;border:1px solid #9a9a9a;"></div>
<svg style="left:270px;top:203px;" width="11" height="8" viewBox="0 0 11 8"><path d="M5.5 1.2L10 6.4H1Z" fill="#222"/></svg>
<div style="left:266px;top:216px;width:19px;height:532px;background:#fff;box-sizing:border-box;border:1px solid #8f8f8f;border-top:2px solid #8f8f8f;"></div>
<div style="left:266px;top:972px;width:19px;height:19px;background:#fff;box-sizing:border-box;border:1px solid #9a9a9a;"></div>
<svg style="left:270px;top:978px;" width="11" height="8" viewBox="0 0 11 8"><path d="M1 1.4H10L5.5 6.6Z" fill="#222"/></svg>
<div style="left:289px;top:198px;width:1px;height:795px;background:#c6c6c6;"></div>
<div style="left:448px;top:206px;width:1295px;height:729.5px;background:#fff;box-sizing:border-box;border:1px solid #c3c3c3;"></div>
<svg style="left:1496px;top:251px;" width="32" height="32" viewBox="0 0 32 32"><rect x="0.6" y="0.4" width="30.4" height="22.8" rx="1.6" fill="#111"/><g fill="#fff"><rect x="4.4" y="13.2" width="5" height="6.4"/><rect x="12.2" y="8.8" width="5" height="10.8"/><rect x="20" y="4.4" width="5" height="15.2"/></g>
<path d="M12.4 23L8.8 30.6M15.6 23V30.6M18.8 23L22.4 30.6" stroke="#111" stroke-width="1.3" fill="none"/></svg>
<span style="left:1538.00px;top:255.01px;font-size:24.2px;color:#161616;letter-spacing:-0.847px;font-weight:bold;">MagicSlides</span>
<div style="left:1899px;top:198px;width:19px;height:682px;background:#f3f3f3;"></div>
<div style="left:1899px;top:198px;width:20px;height:19px;background:#fff;box-sizing:border-box;border:1px solid #9a9a9a;"></div>
<svg style="left:1903px;top:203px;" width="11" height="8" viewBox="0 0 11 8"><path d="M5.5 1.2L10 6.4H1Z" fill="#222"/></svg>
<div style="left:1899px;top:298.5px;width:20px;height:79px;background:#fff;box-sizing:border-box;border:1px solid #8f8f8f;"></div>
<div style="left:1899px;top:861.5px;width:20px;height:18.5px;background:#fff;box-sizing:border-box;border:1px solid #9a9a9a;"></div>
<svg style="left:1903px;top:867px;" width="11" height="8" viewBox="0 0 11 8"><path d="M1 1.4H10L5.5 6.6Z" fill="#222"/></svg>
<svg style="left:1901px;top:883px;" width="15" height="38" viewBox="0 0 15 38"><g fill="#5e5e5e"><path d="M7.5 0.8L14 8H1Z"/><path d="M7.5 7L14 14.6H1Z"/><path d="M1 21.4H14L7.5 29Z"/><path d="M1 27.6H14L7.5 35.4Z"/></g></svg>
<div style="left:292px;top:948px;width:1626px;height:1px;background:#c6c6c6;"></div>
<span style="left:304.00px;top:958.72px;font-size:19px;color:#5c5c5c;letter-spacing:-0.355px;">Click to add notes</span>
<div style="left:369px;top:171px;width:313px;height:786px;background:#fff;box-sizing:border-box;border:1px solid #8c8c8c;border-radius:5px;box-shadow:1px 4px 10px rgba(0,0,0,0.26);"></div>
<div style="left:371px;top:173.4px;width:288px;height:28.3px;background:#e9e9e9;"></div>
<span style="left:382.80px;top:180.08px;font-size:15.5px;color:#555555;font-weight:bold;transform:scale(0.9094,1.0);transform-origin:left top;">Recently Used Shapes</span>
<div style="left:371px;top:250.4px;width:288px;height:28.3px;background:#e9e9e9;"></div>
<span style="left:382.80px;top:257.08px;font-size:15.5px;color:#555555;font-weight:bold;transform:scale(0.8695,1.0);transform-origin:left top;">Lines</span>
<div style="left:371px;top:303.4px;width:288px;height:28.3px;background:#e9e9e9;"></div>
<span style="left:382.80px;top:310.08px;font-size:15.5px;color:#555555;font-weight:bold;transform:scale(0.9069,1.0);transform-origin:left top;">Rectangles</span>
<div style="left:371px;top:356.4px;width:288px;height:28.3px;background:#e9e9e9;"></div>
<span style="left:382.80px;top:363.08px;font-size:15.5px;color:#555555;font-weight:bold;transform:scale(0.8750,1.0);transform-origin:left top;">Basic Shapes</span>
<div style="left:371px;top:481.4px;width:288px;height:28.3px;background:#e9e9e9;"></div>
<span style="left:382.80px;top:488.08px;font-size:15.5px;color:#555555;font-weight:bold;transform:scale(0.9321,1.0);transform-origin:left top;">Block Arrows</span>
<div style="left:371px;top:582.4px;width:288px;height:28.3px;background:#e9e9e9;"></div>
<span style="left:382.80px;top:589.08px;font-size:15.5px;color:#555555;font-weight:bold;transform:scale(0.9114,1.0);transform-origin:left top;">Equation Shapes</span>
<div style="left:371px;top:635.4px;width:288px;height:28.3px;background:#e9e9e9;"></div>
<span style="left:382.80px;top:642.08px;font-size:15.5px;color:#555555;font-weight:bold;transform:scale(0.9344,1.0);transform-origin:left top;">Flowchart</span>
<div style="left:371px;top:736.4px;width:288px;height:28.3px;background:#e9e9e9;"></div>
<span style="left:382.80px;top:743.08px;font-size:15.5px;color:#555555;font-weight:bold;transform:scale(0.9170,1.0);transform-origin:left top;">Stars and Banners</span>
<div style="left:371px;top:813.4px;width:288px;height:28.3px;background:#e9e9e9;"></div>
<span style="left:382.80px;top:820.08px;font-size:15.5px;color:#555555;font-weight:bold;transform:scale(0.9093,1.0);transform-origin:left top;">Callouts</span>
<div style="left:371px;top:890.4px;width:288px;height:28.3px;background:#e9e9e9;"></div>
<span style="left:382.80px;top:897.08px;font-size:15.5px;color:#555555;font-weight:bold;transform:scale(0.9508,1.0);transform-origin:left top;">Action Buttons</span>
<div style="left:611px;top:433px;width:24px;height:24px;background:#e1dfdd;"></div>
<div style="left:668.6px;top:950px;width:1.7px;height:1.7px;background:#8a8a8a;"></div>
<div style="left:673.8px;top:950px;width:1.7px;height:1.7px;background:#8a8a8a;"></div>
<div style="left:673.8px;top:944.8px;width:1.7px;height:1.7px;background:#8a8a8a;"></div>
<svg style="left:371px;top:202px" width="24" height="24" viewBox="0 0 24 24"><g fill="none" stroke="#6b6b6b" stroke-width="1" stroke-linejoin="miter"><rect x="2.5" y="4.6" width="18.6" height="15.4" fill="#fff"/><path d="M11.4 8h7.4M11.4 10.4h7.4M4.8 13.2h14M4.8 15.4h14M4.8 17.5h14" stroke="#a6a6a6" stroke-width="0.7"/><text x="4.4" y="12.1" font-size="7.2" font-weight="bold" fill="#4a7ebb" stroke="none" font-family="'Liberation Sans',sans-serif">A</text></g></svg>
<svg style="left:395px;top:202px" width="24" height="24" viewBox="0 0 24 24"><g fill="none" stroke="#6b6b6b" stroke-width="1" stroke-linejoin="miter"><path d="M3 3.4L21 20.6" /></g></svg>
<svg style="left:419px;top:202px" width="24" height="24" viewBox="0 0 24 24"><g fill="none" stroke="#6b6b6b" stroke-width="1" stroke-linejoin="miter"><path d="M3 3.4L21 20.6M21 17V20.6H17.2" /></g></svg>
<svg style="left:443px;top:202px" width="24" height="24" viewBox="0 0 24 24"><g fill="none" stroke="#6b6b6b" stroke-width="1" stroke-linejoin="miter"><rect x="3" y="5.4" width="17.6" height="13.2"/></g></svg>
<svg style="left:467px;top:202px" width="24" height="24" viewBox="0 0 24 24"><g fill="none" stroke="#6b6b6b" stroke-width="1" stroke-linejoin="miter"><ellipse cx="11.8" cy="12" rx="8.8" ry="6.9"/></g></svg>
<svg style="left:491px;top:202px" width="24" height="24" viewBox="0 0 24 24"><g fill="none" stroke="#6b6b6b" stroke-width="1" stroke-linejoin="miter"><rect x="3" y="5.4" width="17.6" height="13.2" rx="3.2"/></g></svg>
<svg style="left:515px;top:202px" width="24" height="24" viewBox="0 0 24 24"><g fill="none" stroke="#6b6b6b" stroke-width="1" stroke-linejoin="miter"><path d="M11.6 4.4L19.8 20.2H3.4Z" /></g></svg>
<svg style="left:539px;top:202px" width="24" height="24" viewBox="0 0 24 24"><g fill="none" stroke="#6b6b6b" stroke-width="1" stroke-linejoin="miter"><path d="M3.4 5.2H11.6V18.4H20.8" /></g></svg>
<svg style="left:563px;top:202px" width="24" height="24" viewBox="0 0 24 24"><g fill="none" stroke="#6b6b6b" stroke-width="1" stroke-linejoin="miter"><path d="M3.4 4.6H11.6V17.6H20.4M18 15L20.6 17.6L18 20.2" /></g></svg>
<svg style="left:587px;top:202px" width="24" height="24" viewBox="0 0 24 24"><g fill="none" stroke="#6b6b6b" stroke-width="1" stroke-linejoin="miter"><path d="M3 8.9H11V3.6L19.8 11.7L11 19.8V14.5H3Z" /></g></svg>
<svg style="left:611px;top:202px" width="24" height="24" viewBox="0 0 24 24"><g fill="none" stroke="#6b6b6b" stroke-width="1" stroke-linejoin="miter"><path d="M8.9 3.6H14.5V11.8H19.8L11.7 20.4L3.6 11.8H8.9Z" /></g></svg>
<svg style="left:635px;top:202px" width="24" height="24" viewBox="0 0 24 24"><g fill="none" stroke="#6b6b6b" stroke-width="1" stroke-linejoin="miter"><path d="M3 19.7V10.9L7.1 4.4H16.5C14.4 6.6 14.2 8.8 16 9.7C17.8 10.5 20.7 10.2 20.7 12.6V18.4Q20.7 19.7 19.4 19.7Z" /></g></svg>
<svg style="left:371px;top:226px" width="24" height="24" viewBox="0 0 24 24"><g fill="none" stroke="#6b6b6b" stroke-width="1" stroke-linejoin="miter"><path d="M9.6 2.4C8 5 5.6 8 6.6 9.8C7.6 11.6 10 10 12 8C14 6 16.4 6.4 16.8 8.6C17.2 11 13.6 14 12.6 16.2C11.8 18 12.8 19.4 14.4 19C16.4 18.4 18.6 15.6 17 14C15.4 12.6 13 14.6 14 16.6C14.8 18.2 16.4 19.4 17.2 20.6" /></g></svg>
<svg style="left:395px;top:226px" width="24" height="24" viewBox="0 0 24 24"><g fill="none" stroke="#6b6b6b" stroke-width="1" stroke-linejoin="miter"><path d="M3.4 4.4C13 4.4 20.6 10.4 20.6 19.6" /></g></svg>
<svg style="left:419px;top:226px" width="24" height="24" viewBox="0 0 24 24"><g fill="none" stroke="#6b6b6b" stroke-width="1" stroke-linejoin="miter"><path d="M2.6 13.6C5.4 3.6 9.4 2 12 11C14.4 19.4 17 19.6 21.2 19" /></g></svg>
<svg style="left:443px;top:226px" width="24" height="24" viewBox="0 0 24 24"><g fill="none" stroke="#6b6b6b" stroke-width="1" stroke-linejoin="miter"><path d="M14 3.6C11 3.6 11 4.8 11 6.4V9C11 10.8 10 11.3 8.4 11.3C10 11.3 11 11.8 11 13.6V16.2C11 17.8 11 19 14 19" /></g></svg>
<svg style="left:467px;top:226px" width="24" height="24" viewBox="0 0 24 24"><g fill="none" stroke="#6b6b6b" stroke-width="1" stroke-linejoin="miter"><path d="M9.6 3.6C12.6 3.6 12.6 4.8 12.6 6.4V9C12.6 10.8 13.6 11.3 15.2 11.3C13.6 11.3 12.6 11.8 12.6 13.6V16.2C12.6 17.8 12.6 19 9.6 19" /></g></svg>
<svg style="left:491px;top:226px" width="24" height="24" viewBox="0 0 24 24"><g fill="none" stroke="#6b6b6b" stroke-width="1" stroke-linejoin="miter"><path d="M11.40 4.00 L13.40 9.85 L19.58 9.94 L14.63 13.65 L16.45 19.56 L11.40 16.00 L6.35 19.56 L8.17 13.65 L3.22 9.94 L9.40 9.85 Z"/></g></svg>
<svg style="left:371px;top:279px" width="24" height="24" viewBox="0 0 24 24"><g fill="none" stroke="#6b6b6b" stroke-width="1" stroke-linejoin="miter"><path d="M3 3.4L21 20.6" /></g></svg>
<svg style="left:395px;top:279px" width="24" height="24" viewBox="0 0 24 24"><g fill="none" stroke="#6b6b6b" stroke-width="1" stroke-linejoin="miter"><path d="M3 3.4L21 20.6M21 17V20.6H17.2" /></g></svg>
<svg style="left:419px;top:279px" width="24" height="24" viewBox="0 0 24 24"><g fill="none" stroke="#6b6b6b" stroke-width="1" stroke-linejoin="miter"><path d="M3 3.4L21 20.6M21 17V20.6H17.2M3 7V3.4H6.8" /></g></svg>
<svg style="left:443px;top:279px" width="24" height="24" viewBox="0 0 24 24"><g fill="none" stroke="#6b6b6b" stroke-width="1" stroke-linejoin="miter"><path d="M3.4 5.2H11.6V18.4H20.8" /></g></svg>
<svg style="left:467px;top:279px" width="24" height="24" viewBox="0 0 24 24"><g fill="none" stroke="#6b6b6b" stroke-width="1" stroke-linejoin="miter"><path d="M3.4 4.6H11.6V17.6H20.4M18 15L20.6 17.6L18 20.2" /></g></svg>
<svg style="left:491px;top:279px" width="24" height="24" viewBox="0 0 24 24"><g fill="none" stroke="#6b6b6b" stroke-width="1" stroke-linejoin="miter"><path d="M3.6 5.4H11.2V18.2H20.4M18 15.6L20.6 18.2L18 20.8M6.2 2.8L3.6 5.4L6.2 8" /></g></svg>
<svg style="left:515px;top:279px" width="24" height="24" viewBox="0 0 24 24"><g fill="none" stroke="#6b6b6b" stroke-width="1" stroke-linejoin="miter"><path d="M7.6 4.6C14 4.6 14.6 8 11 11.4C7.4 14.8 9 18.6 15.6 18.6" /></g></svg>
<svg style="left:539px;top:279px" width="24" height="24" viewBox="0 0 24 24"><g fill="none" stroke="#6b6b6b" stroke-width="1" stroke-linejoin="miter"><path d="M6.6 4.6C13 4.6 14 8 10.4 11.4C7 14.8 9 18 17.6 18M15 15.4L17.8 18L15 20.6" /></g></svg>
<svg style="left:563px;top:279px" width="24" height="24" viewBox="0 0 24 24"><g fill="none" stroke="#6b6b6b" stroke-width="1" stroke-linejoin="miter"><path d="M5.4 5.4C12.4 5 13.4 8.6 10 11.6C6.8 14.6 9 18.4 17.6 18.4M15 15.8L17.8 18.4L15 21M8 2.8L5.2 5.4L8 8" /></g></svg>
<svg style="left:587px;top:279px" width="24" height="24" viewBox="0 0 24 24"><g fill="none" stroke="#6b6b6b" stroke-width="1" stroke-linejoin="miter"><path d="M2.6 13.6C5.4 3.6 9.4 2 12 11C14.4 19.4 17 19.6 21.2 19" /></g></svg>
<svg style="left:611px;top:279px" width="24" height="24" viewBox="0 0 24 24"><g fill="none" stroke="#6b6b6b" stroke-width="1" stroke-linejoin="miter"><path d="M3 19.7V10.9L7.1 4.4H16.5C14.4 6.6 14.2 8.8 16 9.7C17.8 10.5 20.7 10.2 20.7 12.6V18.4Q20.7 19.7 19.4 19.7Z" /></g></svg>
<svg style="left:635px;top:279px" width="24" height="24" viewBox="0 0 24 24"><g fill="none" stroke="#6b6b6b" stroke-width="1" stroke-linejoin="miter"><path d="M9.6 2.4C8 5 5.6 8 6.6 9.8C7.6 11.6 10 10 12 8C14 6 16.4 6.4 16.8 8.6C17.2 11 13.6 14 12.6 16.2C11.8 18 12.8 19.4 14.4 19C16.4 18.4 18.6 15.6 17 14C15.4 12.6 13 14.6 14 16.6C14.8 18.2 16.4 19.4 17.2 20.6" /></g></svg>
<svg style="left:371px;top:332px" width="24" height="24" viewBox="0 0 24 24"><g fill="none" stroke="#6b6b6b" stroke-width="1" stroke-linejoin="miter"><rect x="3" y="5.4" width="17.6" height="13.2"/></g></svg>
<svg style="left:395px;top:332px" width="24" height="24" viewBox="0 0 24 24"><g fill="none" stroke="#6b6b6b" stroke-width="1" stroke-linejoin="miter"><rect x="3" y="5.4" width="17.6" height="13.2" rx="3.2"/></g></svg>
<svg style="left:419px;top:332px" width="24" height="24" viewBox="0 0 24 24"><g fill="none" stroke="#6b6b6b" stroke-width="1" stroke-linejoin="miter"><path d="M3 5.4H16.200000000000003L20.6 9.8V19.200000000000003H3Z" /></g></svg>
<svg style="left:443px;top:332px" width="24" height="24" viewBox="0 0 24 24"><g fill="none" stroke="#6b6b6b" stroke-width="1" stroke-linejoin="miter"><path d="M7.4 5.4H16.200000000000003L20.6 9.8V19.200000000000003H3V9.8Z" /></g></svg>
<svg style="left:467px;top:332px" width="24" height="24" viewBox="0 0 24 24"><g fill="none" stroke="#6b6b6b" stroke-width="1" stroke-linejoin="miter"><path d="M3 5.4H16.200000000000003L20.6 9.8V19.200000000000003H7.4L3 14.8Z" /></g></svg>
<svg style="left:491px;top:332px" width="24" height="24" viewBox="0 0 24 24"><g fill="none" stroke="#6b6b6b" stroke-width="1" stroke-linejoin="miter"><path d="M3.4 4.4H16.200000000000003L20.6 8.8V18.6H3.4Z" /></g></svg>
<svg style="left:515px;top:332px" width="24" height="24" viewBox="0 0 24 24"><g fill="none" stroke="#6b6b6b" stroke-width="1" stroke-linejoin="miter"><path d="M3 4.4H16.6Q20.6 4.4 20.6 8.4V18.6H3Z" /></g></svg>
<svg style="left:539px;top:332px" width="24" height="24" viewBox="0 0 24 24"><g fill="none" stroke="#6b6b6b" stroke-width="1" stroke-linejoin="miter"><path d="M4.6 8.4Q4.6 6.6 6.4 6.6H17.2Q19 6.6 19 8.4V17.4H4.6Z"/></g></svg>
<svg style="left:563px;top:332px" width="24" height="24" viewBox="0 0 24 24"><g fill="none" stroke="#6b6b6b" stroke-width="1" stroke-linejoin="miter"><path d="M6 4.4H20.6V15.600000000000001Q20.6 18.6 17.6 18.6H3V7.4Q3 4.4 6 4.4Z" /></g></svg>
<svg style="left:371px;top:385px" width="24" height="24" viewBox="0 0 24 24"><g fill="none" stroke="#6b6b6b" stroke-width="1" stroke-linejoin="miter"><rect x="2.5" y="4.6" width="18.6" height="15.4" fill="#fff"/><path d="M11.4 8h7.4M11.4 10.4h7.4M4.8 13.2h14M4.8 15.4h14M4.8 17.5h14" stroke="#a6a6a6" stroke-width="0.7"/><text x="4.4" y="12.1" font-size="7.2" font-weight="bold" fill="#4a7ebb" stroke="none" font-family="'Liberation Sans',sans-serif">A</text></g></svg>
<svg style="left:395px;top:385px" width="24" height="24" viewBox="0 0 24 24"><g fill="none" stroke="#6b6b6b" stroke-width="1" stroke-linejoin="miter"><ellipse cx="11.8" cy="11.6" rx="8.8" ry="7"/></g></svg>
<svg style="left:419px;top:385px" width="24" height="24" viewBox="0 0 24 24"><g fill="none" stroke="#6b6b6b" stroke-width="1" stroke-linejoin="miter"><path d="M11.6 4.4L19.8 20.2H3.4Z" /></g></svg>
<svg style="left:443px;top:385px" width="24" height="24" viewBox="0 0 24 24"><g fill="none" stroke="#6b6b6b" stroke-width="1" stroke-linejoin="miter"><path d="M3.4 4.2V20.4H20.6Z" /></g></svg>
<svg style="left:467px;top:385px" width="24" height="24" viewBox="0 0 24 24"><g fill="none" stroke="#6b6b6b" stroke-width="1" stroke-linejoin="miter"><path d="M7.4 5.2H21L17 19.2H2.8Z" /></g></svg>
<svg style="left:491px;top:385px" width="24" height="24" viewBox="0 0 24 24"><g fill="none" stroke="#6b6b6b" stroke-width="1" stroke-linejoin="miter"><path d="M7 5.4H16.6L20.4 19.8H2.8Z" /></g></svg>
<svg style="left:515px;top:385px" width="24" height="24" viewBox="0 0 24 24"><g fill="none" stroke="#6b6b6b" stroke-width="1" stroke-linejoin="miter"><path d="M11.8 3L20.6 11.6L11.8 20.2L3 11.6Z" /></g></svg>
<svg style="left:539px;top:385px" width="24" height="24" viewBox="0 0 24 24"><g fill="none" stroke="#6b6b6b" stroke-width="1" stroke-linejoin="miter"><path d="M11.80 3.80 L20.17 9.88 L16.97 19.72 L6.63 19.72 L3.43 9.88 Z"/></g></svg>
<svg style="left:563px;top:385px" width="24" height="24" viewBox="0 0 24 24"><g fill="none" stroke="#6b6b6b" stroke-width="1" stroke-linejoin="miter"><path d="M3 12L7.4 4.4H16.2L20.6 12L16.2 19.6H7.4Z" /></g></svg>
<svg style="left:587px;top:385px" width="24" height="24" viewBox="0 0 24 24"><g fill="none" stroke="#6b6b6b" stroke-width="1" stroke-linejoin="miter"><path d="M11.60 3.20 L18.48 6.51 L20.18 13.96 L15.42 19.93 L7.78 19.93 L3.02 13.96 L4.72 6.51 Z"/><text x="11.7" y="15.2" font-size="9" text-anchor="middle" fill="#4e4e4e" stroke="none" font-family="'Liberation Sans',sans-serif" font-weight="normal">7</text></g></svg>
<svg style="left:611px;top:385px" width="24" height="24" viewBox="0 0 24 24"><g fill="none" stroke="#6b6b6b" stroke-width="1" stroke-linejoin="miter"><path d="M14.97 3.87 L19.73 8.63 L19.73 15.37 L14.97 20.13 L8.23 20.13 L3.47 15.37 L3.47 8.63 L8.23 3.87 Z"/><text x="11.7" y="15.2" font-size="9" text-anchor="middle" fill="#4e4e4e" stroke="none" font-family="'Liberation Sans',sans-serif" font-weight="normal">8</text></g></svg>
<svg style="left:635px;top:385px" width="24" height="24" viewBox="0 0 24 24"><g fill="none" stroke="#6b6b6b" stroke-width="1" stroke-linejoin="miter"><path d="M14.32 3.63 L18.72 6.83 L20.40 12.00 L18.72 17.17 L14.32 20.37 L8.88 20.37 L4.48 17.17 L2.80 12.00 L4.48 6.83 L8.88 3.63 Z"/><text x="11.7" y="15.2" font-size="9" text-anchor="middle" fill="#4e4e4e" stroke="none" font-family="'Liberation Sans',sans-serif" font-weight="normal" textLength="7" lengthAdjust="spacingAndGlyphs">10</text></g></svg>
<svg style="left:371px;top:409px" width="24" height="24" viewBox="0 0 24 24"><g fill="none" stroke="#6b6b6b" stroke-width="1" stroke-linejoin="miter"><path d="M13.88 3.50 L17.82 5.78 L20.10 9.72 L20.10 14.28 L17.82 18.22 L13.88 20.50 L9.32 20.50 L5.38 18.22 L3.10 14.28 L3.10 9.72 L5.38 5.78 L9.32 3.50 Z"/><text x="11.7" y="15.3" font-size="9" text-anchor="middle" fill="#4e4e4e" stroke="none" font-family="'Liberation Sans',sans-serif" font-weight="normal" textLength="8" lengthAdjust="spacingAndGlyphs">12</text></g></svg>
<svg style="left:395px;top:409px" width="24" height="24" viewBox="0 0 24 24"><g fill="none" stroke="#6b6b6b" stroke-width="1" stroke-linejoin="miter"><path d="M11.8 3.2V12H20.6A8.8 8.8 0 1 1 11.8 3.2Z" /></g></svg>
<svg style="left:419px;top:409px" width="24" height="24" viewBox="0 0 24 24"><g fill="none" stroke="#6b6b6b" stroke-width="1" stroke-linejoin="miter"><path d="M8.2 4.2L20.4 14.6A8.6 8.6 0 1 1 8.2 4.2Z" /></g></svg>
<svg style="left:443px;top:409px" width="24" height="24" viewBox="0 0 24 24"><g fill="none" stroke="#6b6b6b" stroke-width="1" stroke-linejoin="miter"><path d="M11.8 3.4H20.6V12A8.8 8.6 0 1 1 11.8 3.4Z" /></g></svg>
<svg style="left:467px;top:409px" width="24" height="24" viewBox="0 0 24 24"><g fill="none" stroke="#6b6b6b" stroke-width="1" stroke-linejoin="miter"><rect x="3" y="3.4" width="17.6" height="17.2"/><rect x="6.2" y="6.6" width="11.2" height="10.8"/></g></svg>
<svg style="left:491px;top:409px" width="24" height="24" viewBox="0 0 24 24"><g fill="none" stroke="#6b6b6b" stroke-width="1" stroke-linejoin="miter"><path d="M3 3.4H20.6L18 6.2H6V17.6L3 20.6Z" /></g></svg>
<svg style="left:515px;top:409px" width="24" height="24" viewBox="0 0 24 24"><g fill="none" stroke="#6b6b6b" stroke-width="1" stroke-linejoin="miter"><path d="M3 3.6H9.6V14.4H20.2V20.4H3Z" /></g></svg>
<svg style="left:539px;top:409px" width="24" height="24" viewBox="0 0 24 24"><g fill="none" stroke="#6b6b6b" stroke-width="1" stroke-linejoin="miter"><path d="M3 20.4V13.4L13.2 3.6H20.4Z" /></g></svg>
<svg style="left:563px;top:409px" width="24" height="24" viewBox="0 0 24 24"><g fill="none" stroke="#6b6b6b" stroke-width="1" stroke-linejoin="miter"><path d="M8.6 3.4H15V9H20.6V15.2H15V20.6H8.6V15.2H3V9H8.6Z" /></g></svg>
<svg style="left:587px;top:409px" width="24" height="24" viewBox="0 0 24 24"><g fill="none" stroke="#6b6b6b" stroke-width="1" stroke-linejoin="miter"><path d="M6.4 3.4H17.2A3.4 3.4 0 0 0 20.6 6.8V17.2A3.4 3.4 0 0 0 17.2 20.6H6.4A3.4 3.4 0 0 0 3 17.2V6.8A3.4 3.4 0 0 0 6.4 3.4Z" /></g></svg>
<svg style="left:611px;top:409px" width="24" height="24" viewBox="0 0 24 24"><g fill="none" stroke="#6b6b6b" stroke-width="1" stroke-linejoin="miter"><path d="M5 5.6V18.4A6.8 2.2 0 0 0 18.6 18.4V5.6" /><ellipse cx="11.8" cy="5.6" rx="6.8" ry="2.2"/></g></svg>
<svg style="left:635px;top:409px" width="24" height="24" viewBox="0 0 24 24"><g fill="none" stroke="#6b6b6b" stroke-width="1" stroke-linejoin="miter"><path d="M3.4 7.8H16.4V20.6H3.4ZM3.4 7.8L7.6 3.6H20.6L16.4 7.8M20.6 3.6V16.4L16.4 20.6" /></g></svg>
<svg style="left:371px;top:433px" width="24" height="24" viewBox="0 0 24 24"><g fill="none" stroke="#6b6b6b" stroke-width="1" stroke-linejoin="miter"><rect x="3" y="3.4" width="17.6" height="17.2"/><rect x="5.6" y="6" width="12.4" height="12"/><path d="M3 3.4L5.6 6M20.6 3.4L18 6M3 20.6L5.6 18M20.6 20.6L18 18" /></g></svg>
<svg style="left:395px;top:433px" width="24" height="24" viewBox="0 0 24 24"><g fill="none" stroke="#6b6b6b" stroke-width="1" stroke-linejoin="miter"><circle cx="11.8" cy="12" r="8.8"/><circle cx="11.8" cy="12" r="5.6"/></g></svg>
<svg style="left:419px;top:433px" width="24" height="24" viewBox="0 0 24 24"><g fill="none" stroke="#6b6b6b" stroke-width="1" stroke-linejoin="miter"><circle cx="11.8" cy="12" r="8.8"/><path d="M9.08 6.88A5.8 5.8 0 0 1 16.92 14.72ZM14.52 17.12A5.8 5.8 0 0 1 6.68 9.28Z" /></g></svg>
<svg style="left:443px;top:433px" width="24" height="24" viewBox="0 0 24 24"><g fill="none" stroke="#6b6b6b" stroke-width="1" stroke-linejoin="miter"><path d="M3 15.4A8.8 8.8 0 0 1 20.6 15.4H17A5.2 5.2 0 0 0 6.6 15.4Z" /></g></svg>
<svg style="left:467px;top:433px" width="24" height="24" viewBox="0 0 24 24"><g fill="none" stroke="#6b6b6b" stroke-width="1" stroke-linejoin="miter"><path d="M3 3.4H20.6V17.2L17.2 20.6H3ZM20.6 17.2L17.6 17.8L17.2 20.6" /></g></svg>
<svg style="left:491px;top:433px" width="24" height="24" viewBox="0 0 24 24"><g fill="none" stroke="#6b6b6b" stroke-width="1" stroke-linejoin="miter"><circle cx="11.8" cy="12" r="8.8"/><circle cx="8.6" cy="9" r="0.9"/><circle cx="15" cy="9" r="0.9"/><path d="M6.8 14.4C9 18 14.6 18 16.8 14.4" /></g></svg>
<svg style="left:515px;top:433px" width="24" height="24" viewBox="0 0 24 24"><g fill="none" stroke="#6b6b6b" stroke-width="1" stroke-linejoin="miter"><path d="M11.8 6.8C13 2.6 20.6 2.6 20.6 8.6C20.6 13 14 16.6 11.8 20.6C9.6 16.6 3 13 3 8.6C3 2.6 10.6 2.6 11.8 6.8Z" /></g></svg>
<svg style="left:539px;top:433px" width="24" height="24" viewBox="0 0 24 24"><g fill="none" stroke="#6b6b6b" stroke-width="1" stroke-linejoin="miter"><path d="M8.4 3.4L13.2 8L11.4 8.8L16 12.6L14.4 13.4L21.6 21L11 14.8L13 13.8L7.4 10.4L9.8 9.2L3.8 5.6Z" /></g></svg>
<svg style="left:563px;top:433px" width="24" height="24" viewBox="0 0 24 24"><g fill="none" stroke="#6b6b6b" stroke-width="1" stroke-linejoin="miter"><circle cx="11.8" cy="12" r="5"/><path d="M11.8 2.2L13.5 4.9H10.1ZM11.8 21.8L13.5 19.1H10.1ZM2 12L4.7 10.3V13.7ZM21.6 12L18.9 10.3V13.7ZM4.8 5H8.2L4.8 8.4ZM18.8 5H15.4L18.8 8.4ZM4.8 19H8.2L4.8 15.6ZM18.8 19H15.4L18.8 15.6Z" stroke-width="0.85"/></g></svg>
<svg style="left:587px;top:433px" width="24" height="24" viewBox="0 0 24 24"><g fill="none" stroke="#6b6b6b" stroke-width="1" stroke-linejoin="miter"><path d="M17.4 3.4A8.8 8.8 0 1 0 17.4 20.6A10.6 10.6 0 0 1 17.4 3.4Z" /></g></svg>
<svg style="left:611px;top:433px" width="24" height="24" viewBox="0 0 24 24"><g fill="none" stroke="#6b6b6b" stroke-width="1" stroke-linejoin="miter"><path d="M5.20 12.00A3.09 3.09 0 0 1 5.60 6.40A3.19 3.19 0 0 1 11.40 6.40A4.56 4.56 0 0 1 19.60 7.60A3.86 3.86 0 0 1 19.00 14.60A3.07 3.07 0 0 1 13.50 15.60A2.62 2.62 0 0 1 8.80 14.80A2.51 2.51 0 0 1 5.20 12.00Z" fill="#fff" stroke-width="1.15"/></g></svg>
<svg style="left:635px;top:433px" width="24" height="24" viewBox="0 0 24 24"><g fill="none" stroke="#6b6b6b" stroke-width="1" stroke-linejoin="miter"><path d="M3.4 4.4C13 4.4 20.6 10.4 20.6 19.6" /></g></svg>
<svg style="left:371px;top:457px" width="24" height="24" viewBox="0 0 24 24"><g fill="none" stroke="#6b6b6b" stroke-width="1" stroke-linejoin="miter"><path d="M7.4 4.2Q3.2 4.2 3.2 8V16Q3.2 19.8 7.4 19.8M16.2 4.2Q20.4 4.2 20.4 8V16Q20.4 19.8 16.2 19.8" /></g></svg>
<svg style="left:395px;top:457px" width="24" height="24" viewBox="0 0 24 24"><g fill="none" stroke="#6b6b6b" stroke-width="1" stroke-linejoin="miter"><path d="M8.6 4C6.6 4 6.6 5 6.6 6.4V9.4C6.6 11 5.8 11.8 4.6 11.8C5.8 11.8 6.6 12.6 6.6 14.2V17.2C6.6 18.6 6.6 19.6 8.6 19.6M14.8 4C16.8 4 16.8 5 16.8 6.4V9.4C16.8 11 17.6 11.8 18.8 11.8C17.6 11.8 16.8 12.6 16.8 14.2V17.2C16.8 18.6 16.8 19.6 14.8 19.6" /></g></svg>
<svg style="left:419px;top:457px" width="24" height="24" viewBox="0 0 24 24"><g fill="none" stroke="#6b6b6b" stroke-width="1" stroke-linejoin="miter"><path d="M14 4.4Q10 4.4 10 7.6V16.4Q10 19.6 14 19.6" /></g></svg>
<svg style="left:443px;top:457px" width="24" height="24" viewBox="0 0 24 24"><g fill="none" stroke="#6b6b6b" stroke-width="1" stroke-linejoin="miter"><path d="M9.6 4.4Q13.6 4.4 13.6 7.6V16.4Q13.6 19.6 9.6 19.6" /></g></svg>
<svg style="left:467px;top:457px" width="24" height="24" viewBox="0 0 24 24"><g fill="none" stroke="#6b6b6b" stroke-width="1" stroke-linejoin="miter"><path d="M14.6 4.2C11 3.6 11 4.8 11 6.4V9C11 10.8 10 11.3 8.4 11.3C10 11.3 11 11.8 11 13.6V16.2C11 17.8 11 19 14.6 19.6" /></g></svg>
<svg style="left:491px;top:457px" width="24" height="24" viewBox="0 0 24 24"><g fill="none" stroke="#6b6b6b" stroke-width="1" stroke-linejoin="miter"><path d="M9.6 3.6C12.6 3.6 12.6 4.8 12.6 6.4V9C12.6 10.8 13.6 11.3 15.2 11.3C13.6 11.3 12.6 11.8 12.6 13.6V16.2C12.6 17.8 12.6 19 9.6 19" /></g></svg>
<svg style="left:371px;top:510px" width="24" height="24" viewBox="0 0 24 24"><g fill="none" stroke="#6b6b6b" stroke-width="1" stroke-linejoin="miter"><path d="M3 8.9H11V3.6L19.8 11.7L11 19.8V14.5H3Z" /></g></svg>
<svg style="left:395px;top:510px" width="24" height="24" viewBox="0 0 24 24"><g fill="none" stroke="#6b6b6b" stroke-width="1" stroke-linejoin="miter"><path d="M19.8 8.9H11.8V3.6L3 11.7L11.8 19.8V14.5H19.8Z" /></g></svg>
<svg style="left:419px;top:510px" width="24" height="24" viewBox="0 0 24 24"><g fill="none" stroke="#6b6b6b" stroke-width="1" stroke-linejoin="miter"><path d="M8.9 20.4V12.2H3.6L11.7 3.6L19.8 12.2H14.5V20.4Z" /></g></svg>
<svg style="left:443px;top:510px" width="24" height="24" viewBox="0 0 24 24"><g fill="none" stroke="#6b6b6b" stroke-width="1" stroke-linejoin="miter"><path d="M8.9 3.6H14.5V11.8H19.8L11.7 20.4L3.6 11.8H8.9Z" /></g></svg>
<svg style="left:467px;top:510px" width="24" height="24" viewBox="0 0 24 24"><g fill="none" stroke="#6b6b6b" stroke-width="1" stroke-linejoin="miter"><path d="M3 11.8L8.4 4V8.4H15.6V4L21 11.8L15.6 19.6V15.2H8.4V19.6Z" /></g></svg>
<svg style="left:491px;top:510px" width="24" height="24" viewBox="0 0 24 24"><g fill="none" stroke="#6b6b6b" stroke-width="1" stroke-linejoin="miter"><path d="M11.8 3L19.4 8.4H15.2V15.6H19.4L11.8 21L4.2 15.6H8.4V8.4H4.2Z" /></g></svg>
<svg style="left:515px;top:510px" width="24" height="24" viewBox="0 0 24 24"><g fill="none" stroke="#6b6b6b" stroke-width="1" stroke-linejoin="miter"><path d="M11.8 3.4L14.6 6.2H12.8V10.8H17.4V9L20.2 11.8L17.4 14.6V12.8H12.8V17.4H14.6L11.8 20.2L9 17.4H10.8V12.8H6.2V14.6L3.4 11.8L6.2 9V10.8H10.8V6.2H9Z" /></g></svg>
<svg style="left:539px;top:510px" width="24" height="24" viewBox="0 0 24 24"><g fill="none" stroke="#6b6b6b" stroke-width="1" stroke-linejoin="miter"><path d="M11.8 4L15 7.6H13V14.6H17.6V12.4L21 15.8L17.6 19.2V17H6V19.2L2.6 15.8L6 12.4V14.6H10.6V7.6H8.6Z" /></g></svg>
<svg style="left:563px;top:510px" width="24" height="24" viewBox="0 0 24 24"><g fill="none" stroke="#6b6b6b" stroke-width="1" stroke-linejoin="miter"><path d="M3.4 20.6V10.4Q3.4 6.4 7.4 6.4H14.8V3.6L20.4 7.8L14.8 12V9.2H8Q6.2 9.2 6.2 11V20.6Z" /></g></svg>
<svg style="left:587px;top:510px" width="24" height="24" viewBox="0 0 24 24"><g fill="none" stroke="#6b6b6b" stroke-width="1" stroke-linejoin="miter"><path d="M3.6 20.6V10A6.2 6.2 0 0 1 16 10V12.4H18.8L14.6 17L10.4 12.4H13.2V10A3.4 3.4 0 0 0 6.4 10V20.6Z" /></g></svg>
<svg style="left:611px;top:510px" width="24" height="24" viewBox="0 0 24 24"><g fill="none" stroke="#6b6b6b" stroke-width="1" stroke-linejoin="miter"><path d="M3 15.8L7.2 11.6V14.4H14.6V8H11.8L16 3.6L20.2 8H17.4V17.2H7.2V20Z" /></g></svg>
<svg style="left:635px;top:510px" width="24" height="24" viewBox="0 0 24 24"><g fill="none" stroke="#6b6b6b" stroke-width="1" stroke-linejoin="miter"><path d="M3.4 17.4H14.6V8H11.8L16 3.6L20.2 8H17.4V20.2H3.4Z" /></g></svg>
<svg style="left:371px;top:534px" width="24" height="24" viewBox="0 0 24 24"><g fill="none" stroke="#6b6b6b" stroke-width="1" stroke-linejoin="miter"><path d="M14.4 3.8C6.6 3.8 3.4 7.4 3.4 10.4C3.4 14 7.4 17 12.4 17.4V19.8L17.4 15.8L12.4 12.6V14.8C9 14.6 6.4 12.8 6.4 10.4C6.4 7.8 9.6 6.6 14.4 6.6Z" /></g></svg>
<svg style="left:395px;top:534px" width="24" height="24" viewBox="0 0 24 24"><g fill="none" stroke="#6b6b6b" stroke-width="1" stroke-linejoin="miter"><path d="M9.2 3.8C17 3.8 20.2 7.4 20.2 10.4C20.2 14 16.2 17 11.2 17.4V19.8L6.2 15.8L11.2 12.6V14.8C14.6 14.6 17.2 12.8 17.2 10.4C17.2 7.8 14 6.6 9.2 6.6Z" /></g></svg>
<svg style="left:419px;top:534px" width="24" height="24" viewBox="0 0 24 24"><g fill="none" stroke="#6b6b6b" stroke-width="1" stroke-linejoin="miter"><path d="M3.4 8.4C3.4 15 7 18.6 10.6 18.6C14.4 18.6 17.4 14.4 17.6 9.6H20.2L16.2 4.6L12.6 9.6H15C14.8 13 13 15.6 10.6 15.6C8 15.6 6.4 12.8 6.4 8.4Z" /></g></svg>
<svg style="left:443px;top:534px" width="24" height="24" viewBox="0 0 24 24"><g fill="none" stroke="#6b6b6b" stroke-width="1" stroke-linejoin="miter"><path d="M3.4 15.6C3.4 8.6 7 5.4 10.6 5.4C14.4 5.4 17.4 9.6 17.6 14.4H20.2L16.2 19.4L12.6 14.4H15C14.8 11 13 8.4 10.6 8.4C8 8.4 6.4 11.2 6.4 15.6Z" /></g></svg>
<svg style="left:467px;top:534px" width="24" height="24" viewBox="0 0 24 24"><g fill="none" stroke="#6b6b6b" stroke-width="1" stroke-linejoin="miter"><path d="M2.8 9V15M4.6 9V15M6.4 9H12V4.6L20.4 12L12 19.4V15H6.4Z" /></g></svg>
<svg style="left:491px;top:534px" width="24" height="24" viewBox="0 0 24 24"><g fill="none" stroke="#6b6b6b" stroke-width="1" stroke-linejoin="miter"><path d="M3 8.8H12V4.4L20.6 12L12 19.6V15.2H3L6.4 12Z" /></g></svg>
<svg style="left:515px;top:534px" width="24" height="24" viewBox="0 0 24 24"><g fill="none" stroke="#6b6b6b" stroke-width="1" stroke-linejoin="miter"><path d="M3 5.8H15L20.4 12L15 18.2H3Z" /></g></svg>
<svg style="left:539px;top:534px" width="24" height="24" viewBox="0 0 24 24"><g fill="none" stroke="#6b6b6b" stroke-width="1" stroke-linejoin="miter"><path d="M4 5.8H13L19 12L13 18.2H4L10 12Z" /></g></svg>
<svg style="left:563px;top:534px" width="24" height="24" viewBox="0 0 24 24"><g fill="none" stroke="#6b6b6b" stroke-width="1" stroke-linejoin="miter"><path d="M3 3.8H13V9.6H15.6V7L21 12L15.6 17V14.4H13V20.2H3Z" /></g></svg>
<svg style="left:587px;top:534px" width="24" height="24" viewBox="0 0 24 24"><g fill="none" stroke="#6b6b6b" stroke-width="1" stroke-linejoin="miter"><path d="M3.6 4H20V13H14.2V15.8H16.8L11.8 21.2L6.8 15.8H9.4V13H3.6Z" /></g></svg>
<svg style="left:611px;top:534px" width="24" height="24" viewBox="0 0 24 24"><g fill="none" stroke="#6b6b6b" stroke-width="1" stroke-linejoin="miter"><path d="M20.8 3.8H10.8V9.6H8.2V7L2.8 12L8.2 17V14.4H10.8V20.2H20.8Z" /></g></svg>
<svg style="left:635px;top:534px" width="24" height="24" viewBox="0 0 24 24"><g fill="none" stroke="#6b6b6b" stroke-width="1" stroke-linejoin="miter"><path d="M3.6 20.2H20V11.4H14.2V8.6H16.8L11.8 3.2L6.8 8.6H9.4V11.4H3.6Z" /></g></svg>
<svg style="left:371px;top:558px" width="24" height="24" viewBox="0 0 24 24"><g fill="none" stroke="#6b6b6b" stroke-width="1" stroke-linejoin="miter"><path d="M7 3.6H16.6V9.8H18.2V8L21.6 12L18.2 16V14.2H16.6V20.4H7V14.2H5.4V16L2 12L5.4 8V9.8H7Z" /></g></svg>
<svg style="left:395px;top:558px" width="24" height="24" viewBox="0 0 24 24"><g fill="none" stroke="#6b6b6b" stroke-width="1" stroke-linejoin="miter"><path d="M11.8 2.4L14.4 5.2H13.2V7H16.8V10.6H18.6V9.4L21.4 12L18.6 14.6V13.4H16.8V17H13.2V18.8H14.4L11.8 21.6L9.2 18.8H10.4V17H6.8V13.4H5V14.6L2.2 12L5 9.4V10.6H6.8V7H10.4V5.2H9.2Z" /></g></svg>
<svg style="left:419px;top:558px" width="24" height="24" viewBox="0 0 24 24"><g fill="none" stroke="#6b6b6b" stroke-width="1" stroke-linejoin="miter"><path d="M4.4 16V11.6A6.4 6.4 0 0 1 17.2 11.6V12.6H19.6L15.6 17.4L11.6 12.6H14.2V11.6A3.4 3.4 0 0 0 7.4 11.6V16Z" /></g></svg>
<svg style="left:371px;top:611px" width="24" height="24" viewBox="0 0 24 24"><g fill="none" stroke="#6b6b6b" stroke-width="1" stroke-linejoin="miter"><path d="M9 3.6H14.4V9.4H20.2V14.6H14.4V20.4H9V14.6H3.2V9.4H9Z" /></g></svg>
<svg style="left:395px;top:611px" width="24" height="24" viewBox="0 0 24 24"><g fill="none" stroke="#6b6b6b" stroke-width="1" stroke-linejoin="miter"><rect x="3.2" y="10" width="17.2" height="3.8"/></g></svg>
<svg style="left:419px;top:611px" width="24" height="24" viewBox="0 0 24 24"><g fill="none" stroke="#6b6b6b" stroke-width="1" stroke-linejoin="miter"><path d="M3.8 7L7 3.8L11.8 8.6L16.6 3.8L19.8 7L15 11.8L19.8 16.6L16.6 19.8L11.8 15L7 19.8L3.8 16.6L8.6 11.8Z" /></g></svg>
<svg style="left:443px;top:611px" width="24" height="24" viewBox="0 0 24 24"><g fill="none" stroke="#6b6b6b" stroke-width="1" stroke-linejoin="miter"><rect x="3.2" y="10.4" width="17.2" height="2.8"/><circle cx="11.8" cy="6.2" r="1.6"/><circle cx="11.8" cy="17.4" r="1.6"/></g></svg>
<svg style="left:467px;top:611px" width="24" height="24" viewBox="0 0 24 24"><g fill="none" stroke="#6b6b6b" stroke-width="1" stroke-linejoin="miter"><rect x="3.2" y="6.8" width="17.2" height="3.8"/><rect x="3.2" y="13.4" width="17.2" height="3.8"/></g></svg>
<svg style="left:491px;top:611px" width="24" height="24" viewBox="0 0 24 24"><g fill="none" stroke="#6b6b6b" stroke-width="1" stroke-linejoin="miter"><rect x="3.2" y="6.8" width="17.2" height="3.8"/><rect x="3.2" y="13.4" width="17.2" height="3.8"/><path d="M15.8 2.8H18.6L9 21.2H6.2Z" fill="#fff"/></g></svg>
<svg style="left:371px;top:664px" width="24" height="24" viewBox="0 0 24 24"><g fill="none" stroke="#6b6b6b" stroke-width="1" stroke-linejoin="miter"><rect x="3" y="5.6" width="17.6" height="13"/></g></svg>
<svg style="left:395px;top:664px" width="24" height="24" viewBox="0 0 24 24"><g fill="none" stroke="#6b6b6b" stroke-width="1" stroke-linejoin="miter"><rect x="3" y="5.6" width="17.6" height="13" rx="3.6"/></g></svg>
<svg style="left:419px;top:664px" width="24" height="24" viewBox="0 0 24 24"><g fill="none" stroke="#6b6b6b" stroke-width="1" stroke-linejoin="miter"><path d="M2.4 12L11.8 6.6L21.2 12L11.8 17.4Z" /></g></svg>
<svg style="left:443px;top:664px" width="24" height="24" viewBox="0 0 24 24"><g fill="none" stroke="#6b6b6b" stroke-width="1" stroke-linejoin="miter"><path d="M7.8 5.2H21.2L16.2 18.8H2.8Z" /></g></svg>
<svg style="left:467px;top:664px" width="24" height="24" viewBox="0 0 24 24"><g fill="none" stroke="#6b6b6b" stroke-width="1" stroke-linejoin="miter"><rect x="3" y="5" width="17.6" height="14"/><path d="M5.6 5V19M18 5V19" /></g></svg>
<svg style="left:491px;top:664px" width="24" height="24" viewBox="0 0 24 24"><g fill="none" stroke="#6b6b6b" stroke-width="1" stroke-linejoin="miter"><rect x="3.4" y="3.6" width="16.6" height="16"/><path d="M6 3.6V19.6M3.4 6.2H20" /></g></svg>
<svg style="left:515px;top:664px" width="24" height="24" viewBox="0 0 24 24"><g fill="none" stroke="#6b6b6b" stroke-width="1" stroke-linejoin="miter"><path d="M3 5H20.6V16.6C16 16.6 14 19.4 10.6 19.4C7.6 19.4 6 18.6 3 16.6Z" /></g></svg>
<svg style="left:539px;top:664px" width="24" height="24" viewBox="0 0 24 24"><g fill="none" stroke="#6b6b6b" stroke-width="1" stroke-linejoin="miter"><path d="M6.7 7.1V5.5H19.6V14.4H17.9M5 8.7V7.1H17.9V16H16.2M3.3 8.7H16.2V17.6C12.6 17.6 11.4 19.8 8.6 19.8C6.4 19.8 5.4 19 3.3 17.6Z" /></g></svg>
<svg style="left:563px;top:664px" width="24" height="24" viewBox="0 0 24 24"><g fill="none" stroke="#6b6b6b" stroke-width="1" stroke-linejoin="miter"><rect x="2.4" y="8.6" width="19" height="6.8" rx="3.4"/></g></svg>
<svg style="left:587px;top:664px" width="24" height="24" viewBox="0 0 24 24"><g fill="none" stroke="#6b6b6b" stroke-width="1" stroke-linejoin="miter"><path d="M2.4 12L6.4 5.8H17L21 12L17 18.2H6.4Z" /></g></svg>
<svg style="left:611px;top:664px" width="24" height="24" viewBox="0 0 24 24"><g fill="none" stroke="#6b6b6b" stroke-width="1" stroke-linejoin="miter"><path d="M3.4 8.6L20.8 4.8V18.8H3.4Z" /></g></svg>
<svg style="left:635px;top:664px" width="24" height="24" viewBox="0 0 24 24"><g fill="none" stroke="#6b6b6b" stroke-width="1" stroke-linejoin="miter"><path d="M2.4 5H21.2L17.6 19H6Z" /></g></svg>
<svg style="left:371px;top:688px" width="24" height="24" viewBox="0 0 24 24"><g fill="none" stroke="#6b6b6b" stroke-width="1" stroke-linejoin="miter"><circle cx="11.8" cy="12" r="6.8"/></g></svg>
<svg style="left:395px;top:688px" width="24" height="24" viewBox="0 0 24 24"><g fill="none" stroke="#6b6b6b" stroke-width="1" stroke-linejoin="miter"><path d="M5.2 5H18.4V15.2L11.8 19.6L5.2 15.2Z" /></g></svg>
<svg style="left:419px;top:688px" width="24" height="24" viewBox="0 0 24 24"><g fill="none" stroke="#6b6b6b" stroke-width="1" stroke-linejoin="miter"><path d="M8 5.2H20.6V18.8H3V10.2Z" /></g></svg>
<svg style="left:443px;top:688px" width="24" height="24" viewBox="0 0 24 24"><g fill="none" stroke="#6b6b6b" stroke-width="1" stroke-linejoin="miter"><path d="M3 5.6C6 7.6 9 6.6 11.8 5.2C14.6 3.8 18 3.6 20.6 5V18.4C18 17 14.6 17.2 11.8 18.6C9 20 6 21 3 19Z" /></g></svg>
<svg style="left:467px;top:688px" width="24" height="24" viewBox="0 0 24 24"><g fill="none" stroke="#6b6b6b" stroke-width="1" stroke-linejoin="miter"><circle cx="11.8" cy="12" r="8.4"/><path d="M5.9 6.1L17.7 17.9M17.7 6.1L5.9 17.9" /></g></svg>
<svg style="left:491px;top:688px" width="24" height="24" viewBox="0 0 24 24"><g fill="none" stroke="#6b6b6b" stroke-width="1" stroke-linejoin="miter"><circle cx="11.8" cy="12" r="8.4"/><path d="M11.8 3.6V20.4M3.4 12H20.2" /></g></svg>
<svg style="left:515px;top:688px" width="24" height="24" viewBox="0 0 24 24"><g fill="none" stroke="#6b6b6b" stroke-width="1" stroke-linejoin="miter"><path d="M6.4 3.8H17.2L6.4 20.4H17.2Z" /></g></svg>
<svg style="left:539px;top:688px" width="24" height="24" viewBox="0 0 24 24"><g fill="none" stroke="#6b6b6b" stroke-width="1" stroke-linejoin="miter"><path d="M11.8 3.8L17.6 12L11.8 20.2L6 12ZM6 12H17.6" /></g></svg>
<svg style="left:563px;top:688px" width="24" height="24" viewBox="0 0 24 24"><g fill="none" stroke="#6b6b6b" stroke-width="1" stroke-linejoin="miter"><path d="M11.8 5.4L18.6 18.4H5Z" /></g></svg>
<svg style="left:587px;top:688px" width="24" height="24" viewBox="0 0 24 24"><g fill="none" stroke="#6b6b6b" stroke-width="1" stroke-linejoin="miter"><path d="M3.6 4.6H20L11.8 20.4Z" /></g></svg>
<svg style="left:611px;top:688px" width="24" height="24" viewBox="0 0 24 24"><g fill="none" stroke="#6b6b6b" stroke-width="1" stroke-linejoin="miter"><path d="M7 5.4H20.6C17.4 8.6 17.4 15.4 20.6 18.6H7C1.6 16.6 1.6 7.4 7 5.4Z" /></g></svg>
<svg style="left:635px;top:688px" width="24" height="24" viewBox="0 0 24 24"><g fill="none" stroke="#6b6b6b" stroke-width="1" stroke-linejoin="miter"><path d="M3 3.8H13A8.2 8.2 0 0 1 13 20.2H3Z" /></g></svg>
<svg style="left:371px;top:712px" width="24" height="24" viewBox="0 0 24 24"><g fill="none" stroke="#6b6b6b" stroke-width="1" stroke-linejoin="miter"><path d="M17.8 18.44A8.8 8.8 0 1 0 11.8 20.8H21V18.44Z" /></g></svg>
<svg style="left:395px;top:712px" width="24" height="24" viewBox="0 0 24 24"><g fill="none" stroke="#6b6b6b" stroke-width="1" stroke-linejoin="miter"><path d="M3 8V17.6A8.8 3 0 0 0 20.6 17.6V8" /><ellipse cx="11.8" cy="8" rx="8.8" ry="3"/></g></svg>
<svg style="left:419px;top:712px" width="24" height="24" viewBox="0 0 24 24"><g fill="none" stroke="#6b6b6b" stroke-width="1" stroke-linejoin="miter"><path d="M9 3.4H15.6A3.2 8.6 0 0 1 15.6 20.6H9A3.2 8.6 0 0 1 9 3.4Z" /><path d="M15.6 3.4A3.2 8.6 0 0 0 15.6 20.6" /></g></svg>
<svg style="left:443px;top:712px" width="24" height="24" viewBox="0 0 24 24"><g fill="none" stroke="#6b6b6b" stroke-width="1" stroke-linejoin="miter"><path d="M3 12L7 3.6H14.6A6 8.4 0 0 1 14.6 20.4H7Z" /></g></svg>
<svg style="left:371px;top:765px" width="24" height="24" viewBox="0 0 24 24"><g fill="none" stroke="#6b6b6b" stroke-width="1" stroke-linejoin="miter"><path d="M11.60 6.80 L14.80 2.60 L14.60 7.60 L20.20 6.20 L16.60 10.00 L21.60 11.60 L17.00 13.40 L19.60 18.40 L14.40 15.60 L13.60 20.40 L11.00 16.20 L8.60 22.00 L8.00 16.00 L3.20 17.60 L6.20 13.40 L2.00 11.00 L6.60 9.80 L3.80 5.00 L9.00 7.60 Z"/></g></svg>
<svg style="left:395px;top:765px" width="24" height="24" viewBox="0 0 24 24"><g fill="none" stroke="#6b6b6b" stroke-width="1" stroke-linejoin="miter"><path d="M12.40 6.60 L15.60 3.00 L15.20 7.00 L20.00 5.40 L17.20 9.00 L21.00 10.40 L17.60 12.20 L20.40 15.40 L16.40 15.00 L17.20 19.40 L13.60 16.20 L12.40 21.00 L10.40 16.60 L7.00 20.60 L7.40 16.00 L3.20 17.40 L5.80 13.60 L2.40 12.00 L6.00 10.40 L3.40 6.80 L7.60 8.20 L8.60 4.20 Z"/></g></svg>
<svg style="left:419px;top:765px" width="24" height="24" viewBox="0 0 24 24"><g fill="none" stroke="#6b6b6b" stroke-width="1" stroke-linejoin="miter"><path d="M11.80 3.20 L13.00 10.80 L20.60 12.00 L13.00 13.20 L11.80 20.80 L10.60 13.20 L3.00 12.00 L10.60 10.80 Z"/></g></svg>
<svg style="left:443px;top:765px" width="24" height="24" viewBox="0 0 24 24"><g fill="none" stroke="#6b6b6b" stroke-width="1" stroke-linejoin="miter"><path d="M11.80 3.80 L13.86 9.77 L20.17 9.88 L15.13 13.68 L16.97 19.72 L11.80 16.10 L6.63 19.72 L8.47 13.68 L3.43 9.88 L9.74 9.77 Z"/></g></svg>
<svg style="left:467px;top:765px" width="24" height="24" viewBox="0 0 24 24"><g fill="none" stroke="#6b6b6b" stroke-width="1" stroke-linejoin="miter"><path d="M11.80 3.20 L14.35 7.58 L19.42 7.60 L16.90 12.00 L19.42 16.40 L14.35 16.42 L11.80 20.80 L9.25 16.42 L4.18 16.40 L6.70 12.00 L4.18 7.60 L9.25 7.58 Z"/></g></svg>
<svg style="left:491px;top:765px" width="24" height="24" viewBox="0 0 24 24"><g fill="none" stroke="#6b6b6b" stroke-width="1" stroke-linejoin="miter"><path d="M11.80 3.20 L14.14 7.33 L18.84 6.59 L17.06 11.00 L20.57 14.20 L16.02 15.57 L15.70 20.31 L11.80 17.60 L7.90 20.31 L7.58 15.57 L3.03 14.20 L6.54 11.00 L4.76 6.59 L9.46 7.33 Z"/></g></svg>
<svg style="left:515px;top:765px" width="24" height="24" viewBox="0 0 24 24"><g fill="none" stroke="#6b6b6b" stroke-width="1" stroke-linejoin="miter"><path d="M11.80 3.20 L14.40 5.72 L18.02 5.78 L18.08 9.40 L20.60 12.00 L18.08 14.60 L18.02 18.22 L14.40 18.28 L11.80 20.80 L9.20 18.28 L5.58 18.22 L5.52 14.60 L3.00 12.00 L5.52 9.40 L5.58 5.78 L9.20 5.72 Z" stroke-width="1"/><text x="11.8" y="14.6" font-size="7.8" text-anchor="middle" fill="#4e4e4e" stroke="none" font-family="'Liberation Serif',serif" font-weight="normal">8</text></g></svg>
<svg style="left:539px;top:765px" width="24" height="24" viewBox="0 0 24 24"><g fill="none" stroke="#6b6b6b" stroke-width="1" stroke-linejoin="miter"><path d="M11.80 3.20 L13.93 5.44 L16.97 4.88 L17.38 7.94 L20.17 9.28 L18.70 12.00 L20.17 14.72 L17.38 16.06 L16.97 19.12 L13.93 18.56 L11.80 20.80 L9.67 18.56 L6.63 19.12 L6.22 16.06 L3.43 14.72 L4.90 12.00 L3.43 9.28 L6.22 7.94 L6.63 4.88 L9.67 5.44 Z" stroke-width="1"/><text x="11.8" y="14.6" font-size="7.8" text-anchor="middle" fill="#4e4e4e" stroke="none" font-family="'Liberation Serif',serif" font-weight="normal" textLength="6.6" lengthAdjust="spacingAndGlyphs">10</text></g></svg>
<svg style="left:563px;top:765px" width="24" height="24" viewBox="0 0 24 24"><g fill="none" stroke="#6b6b6b" stroke-width="1" stroke-linejoin="miter"><path d="M11.80 3.20 L13.48 5.72 L16.20 4.38 L16.40 7.40 L19.42 7.60 L18.08 10.32 L20.60 12.00 L18.08 13.68 L19.42 16.40 L16.40 16.60 L16.20 19.62 L13.48 18.28 L11.80 20.80 L10.12 18.28 L7.40 19.62 L7.20 16.60 L4.18 16.40 L5.52 13.68 L3.00 12.00 L5.52 10.32 L4.18 7.60 L7.20 7.40 L7.40 4.38 L10.12 5.72 Z" stroke-width="1"/><text x="11.8" y="14.6" font-size="7.8" text-anchor="middle" fill="#4e4e4e" stroke="none" font-family="'Liberation Serif',serif" font-weight="normal" textLength="6.6" lengthAdjust="spacingAndGlyphs">12</text></g></svg>
<svg style="left:587px;top:765px" width="24" height="24" viewBox="0 0 24 24"><g fill="none" stroke="#6b6b6b" stroke-width="1" stroke-linejoin="miter"><path d="M11.80 3.20 L13.05 5.72 L15.17 3.87 L15.36 6.68 L18.02 5.78 L17.12 8.44 L19.93 8.63 L18.08 10.75 L20.60 12.00 L18.08 13.25 L19.93 15.37 L17.12 15.56 L18.02 18.22 L15.36 17.32 L15.17 20.13 L13.05 18.28 L11.80 20.80 L10.55 18.28 L8.43 20.13 L8.24 17.32 L5.58 18.22 L6.48 15.56 L3.67 15.37 L5.52 13.25 L3.00 12.00 L5.52 10.75 L3.67 8.63 L6.48 8.44 L5.58 5.78 L8.24 6.68 L8.43 3.87 L10.55 5.72 Z" stroke-width="0.85"/><text x="11.8" y="14.6" font-size="7.8" text-anchor="middle" fill="#4e4e4e" stroke="none" font-family="'Liberation Serif',serif" font-weight="normal" textLength="6.6" lengthAdjust="spacingAndGlyphs">16</text></g></svg>
<svg style="left:611px;top:765px" width="24" height="24" viewBox="0 0 24 24"><g fill="none" stroke="#6b6b6b" stroke-width="1" stroke-linejoin="miter"><path d="M11.80 3.20 L12.62 5.75 L14.08 3.50 L14.21 6.18 L16.20 4.38 L15.64 7.00 L18.02 5.78 L16.80 8.16 L19.42 7.60 L17.62 9.59 L20.30 9.72 L18.05 11.18 L20.60 12.00 L18.05 12.82 L20.30 14.28 L17.62 14.41 L19.42 16.40 L16.80 15.84 L18.02 18.22 L15.64 17.00 L16.20 19.62 L14.21 17.82 L14.08 20.50 L12.62 18.25 L11.80 20.80 L10.98 18.25 L9.52 20.50 L9.39 17.82 L7.40 19.62 L7.96 17.00 L5.58 18.22 L6.80 15.84 L4.18 16.40 L5.98 14.41 L3.30 14.28 L5.55 12.82 L3.00 12.00 L5.55 11.18 L3.30 9.72 L5.98 9.59 L4.18 7.60 L6.80 8.16 L5.58 5.78 L7.96 7.00 L7.40 4.38 L9.39 6.18 L9.52 3.50 L10.98 5.75 Z" stroke-width="0.62"/><text x="11.8" y="14.6" font-size="7.8" text-anchor="middle" fill="#4e4e4e" stroke="none" font-family="'Liberation Serif',serif" font-weight="normal" textLength="6.6" lengthAdjust="spacingAndGlyphs">24</text></g></svg>
<svg style="left:635px;top:765px" width="24" height="24" viewBox="0 0 24 24"><g fill="none" stroke="#6b6b6b" stroke-width="1" stroke-linejoin="miter"><path d="M11.80 3.20 L12.42 5.73 L13.52 3.37 L13.63 5.97 L15.17 3.87 L14.77 6.44 L16.69 4.68 L15.80 7.13 L18.02 5.78 L16.67 8.00 L19.12 7.11 L17.36 9.03 L19.93 8.63 L17.83 10.17 L20.43 10.28 L18.07 11.38 L20.60 12.00 L18.07 12.62 L20.43 13.72 L17.83 13.83 L19.93 15.37 L17.36 14.97 L19.12 16.89 L16.67 16.00 L18.02 18.22 L15.80 16.87 L16.69 19.32 L14.77 17.56 L15.17 20.13 L13.63 18.03 L13.52 20.63 L12.42 18.27 L11.80 20.80 L11.18 18.27 L10.08 20.63 L9.97 18.03 L8.43 20.13 L8.83 17.56 L6.91 19.32 L7.80 16.87 L5.58 18.22 L6.93 16.00 L4.48 16.89 L6.24 14.97 L3.67 15.37 L5.77 13.83 L3.17 13.72 L5.53 12.62 L3.00 12.00 L5.53 11.38 L3.17 10.28 L5.77 10.17 L3.67 8.63 L6.24 9.03 L4.48 7.11 L6.93 8.00 L5.58 5.78 L7.80 7.13 L6.91 4.68 L8.83 6.44 L8.43 3.87 L9.97 5.97 L10.08 3.37 L11.18 5.73 Z" stroke-width="0.5"/><text x="11.8" y="14.6" font-size="7.8" text-anchor="middle" fill="#4e4e4e" stroke="none" font-family="'Liberation Serif',serif" font-weight="normal" textLength="6.6" lengthAdjust="spacingAndGlyphs">32</text></g></svg>
<svg style="left:371px;top:789px" width="24" height="24" viewBox="0 0 24 24"><g fill="none" stroke="#6b6b6b" stroke-width="1" stroke-linejoin="miter"><path d="M7 7.4H16.6V16.6H7ZM7 9.8H3.2L5.4 14L3.2 18.6H9V16.6M16.6 9.8H20.4L18.2 14L20.4 18.6H14.6V16.6M7 16.6L9 18.6M16.6 16.6L14.6 18.6" /></g></svg>
<svg style="left:395px;top:789px" width="24" height="24" viewBox="0 0 24 24"><g fill="none" stroke="#6b6b6b" stroke-width="1" stroke-linejoin="miter"><path d="M7 7.4H16.6V16.6H7ZM7 14.2H3.2L5.4 10L3.2 5.4H9V7.4M16.6 14.2H20.4L18.2 10L20.4 5.4H14.6V7.4M7 7.4L9 5.4M16.6 7.4L14.6 5.4" /></g></svg>
<svg style="left:419px;top:789px" width="24" height="24" viewBox="0 0 24 24"><g fill="none" stroke="#6b6b6b" stroke-width="1" stroke-linejoin="miter"><g transform="translate(0,-2.4)"><path d="M6.8 9.4C10 6.6 13.6 6.6 16.8 9.4V17.6C13.6 15 10 15 6.8 17.6ZM6.8 11.4C5.6 11.8 4.4 12.4 3.2 13.2L5.4 16L3.4 21C5.2 19.8 7 19 8.8 18.6V16.4M16.8 11.4C18 11.8 19.2 12.4 20.4 13.2L18.2 16L20.2 21C18.4 19.8 16.6 19 14.8 18.6V16.4" /></g></g></svg>
<svg style="left:443px;top:789px" width="24" height="24" viewBox="0 0 24 24"><g fill="none" stroke="#6b6b6b" stroke-width="1" stroke-linejoin="miter"><g transform="translate(0,1.8)"><path d="M6.8 14.6C10 17.4 13.6 17.4 16.8 14.6V6.4C13.6 9 10 9 6.8 6.4ZM6.8 12.6C5.6 12.2 4.4 11.6 3.2 10.8L5.4 8L3.4 3C5.2 4.2 7 5 8.8 5.4V7.6M16.8 12.6C18 12.2 19.2 11.6 20.4 10.8L18.2 8L20.2 3C18.4 4.2 16.6 5 14.8 5.4V7.6" /></g></g></svg>
<svg style="left:467px;top:789px" width="24" height="24" viewBox="0 0 24 24"><g fill="none" stroke="#6b6b6b" stroke-width="1" stroke-linejoin="miter"><path d="M7.4 18.2V5.2A1.6 1.6 0 0 1 9 3.6H19A1.6 1.6 0 0 1 19 6.8H16.6V19A1.6 1.6 0 0 1 15 20.6H5A1.6 1.6 0 0 1 5 17.4H7.4M9 3.6A1.6 1.6 0 0 1 9 6.8H16.6M9 6.8A0.8 0.8 0 0 1 9 5.2M5 17.4A0.8 0.8 0 0 1 5 19H6.6A1.6 1.6 0 0 1 5 20.6" /></g></svg>
<svg style="left:491px;top:789px" width="24" height="24" viewBox="0 0 24 24"><g fill="none" stroke="#6b6b6b" stroke-width="1" stroke-linejoin="miter"><path d="M5.6 7.4H17.4V5.6A1.6 1.6 0 0 1 20.6 5.6V15.4A1.6 1.6 0 0 1 19 17H6.4V19A1.6 1.6 0 0 1 3.2 19V9A1.6 1.6 0 0 1 4.8 7.4ZM17.4 7.4H19A1.6 1.6 0 0 0 20.6 5.6M19 7.4V5.6M3.2 9A1.6 1.6 0 0 0 6.4 9V17M4.8 10.6A0.8 0.8 0 0 0 4.8 9" /></g></svg>
<svg style="left:515px;top:789px" width="24" height="24" viewBox="0 0 24 24"><g fill="none" stroke="#6b6b6b" stroke-width="1" stroke-linejoin="miter"><path d="M3.2 5.6C6 3.6 9 4.2 11.8 5.8C14.6 7.4 17.8 7.2 20.4 5V17.6C17.8 19.8 14.6 20 11.8 18.4C9 16.8 6 16.2 3.2 18.2Z" /></g></svg>
<svg style="left:539px;top:789px" width="24" height="24" viewBox="0 0 24 24"><g fill="none" stroke="#6b6b6b" stroke-width="1" stroke-linejoin="miter"><path d="M3.2 5.4C5.4 3.8 6.8 4 8.8 5.2C10.8 6.4 12.6 6.2 14.6 5C16.6 3.8 18.4 4 20.4 5.4V18.2C18.4 16.8 16.6 16.6 14.6 17.8C12.6 19 10.8 19.2 8.8 18C6.8 16.8 5.4 16.6 3.2 18.2Z" /></g></svg>
<svg style="left:371px;top:842px" width="24" height="24" viewBox="0 0 24 24"><g fill="none" stroke="#6b6b6b" stroke-width="1" stroke-linejoin="miter"><path d="M3.4 3.8H20.2V15H12.4L9.4 19.4L7 15H3.4Z" /></g></svg>
<svg style="left:395px;top:842px" width="24" height="24" viewBox="0 0 24 24"><g fill="none" stroke="#6b6b6b" stroke-width="1" stroke-linejoin="miter"><path d="M5.4 3.8H18.2Q20.2 3.8 20.2 5.8V13Q20.2 15 18.2 15H12.4L9.4 19.4L7 15H5.4Q3.4 15 3.4 13V5.8Q3.4 3.8 5.4 3.8Z" /></g></svg>
<svg style="left:419px;top:842px" width="24" height="24" viewBox="0 0 24 24"><g fill="none" stroke="#6b6b6b" stroke-width="1" stroke-linejoin="miter"><path d="M7.6 15.4C1.6 13 2.4 4.6 11.8 4.2C21.6 4 23 13.6 12.6 16.2C11 16.6 9 18.6 7.2 20.2C7.6 18.6 8 16.8 7.6 15.4Z" /></g></svg>
<svg style="left:443px;top:842px" width="24" height="24" viewBox="0 0 24 24"><g fill="none" stroke="#6b6b6b" stroke-width="1" stroke-linejoin="miter"><path d="M7.43 10.51A2.29 2.29 0 0 1 7.74 6.37A2.42 2.42 0 0 1 12.14 6.37A3.46 3.46 0 0 1 18.38 7.25A2.86 2.86 0 0 1 17.92 12.43A2.33 2.33 0 0 1 13.74 13.17A1.99 1.99 0 0 1 10.17 12.58A1.89 1.89 0 0 1 7.43 10.51Z" /><circle cx="5.6" cy="17.4" r="1.2"/><circle cx="3.4" cy="20" r="0.7"/></g></svg>
<svg style="left:467px;top:842px" width="24" height="24" viewBox="0 0 24 24"><g fill="none" stroke="#6b6b6b" stroke-width="1" stroke-linejoin="miter"><rect x="9.6" y="5.8" width="10.799999999999999" height="9.8"/><path d="M9.6 10.6L2.8 18.2" stroke-width="1.2"/></g></svg>
<svg style="left:491px;top:842px" width="24" height="24" viewBox="0 0 24 24"><g fill="none" stroke="#6b6b6b" stroke-width="1" stroke-linejoin="miter"><rect x="9.6" y="5.8" width="10.799999999999999" height="9.8"/><path d="M9.6 9.6H7.2L4.2 19.2" stroke-width="1.2"/></g></svg>
<svg style="left:515px;top:842px" width="24" height="24" viewBox="0 0 24 24"><g fill="none" stroke="#6b6b6b" stroke-width="1" stroke-linejoin="miter"><rect x="9.6" y="5.8" width="10.799999999999999" height="9.8"/><path d="M9.6 9.4H5.2V17.2L9.6 19.4" /></g></svg>
<svg style="left:539px;top:842px" width="24" height="24" viewBox="0 0 24 24"><g fill="none" stroke="#6b6b6b" stroke-width="1" stroke-linejoin="miter"><rect x="10.2" y="5.8" width="10.2" height="9.8" stroke-dasharray="1 1"/><path d="M9.3 10.6L2.8 18.2" stroke-width="1.2"/><path d="M9.3 5.8V15.6" /></g></svg>
<svg style="left:563px;top:842px" width="24" height="24" viewBox="0 0 24 24"><g fill="none" stroke="#6b6b6b" stroke-width="1" stroke-linejoin="miter"><rect x="10.2" y="5.8" width="10.2" height="9.8" stroke-dasharray="1 1"/><path d="M9.3 9.6H7.2L4.2 19.2" stroke-width="1.2"/><path d="M9.3 5.8V15.6" /></g></svg>
<svg style="left:587px;top:842px" width="24" height="24" viewBox="0 0 24 24"><g fill="none" stroke="#6b6b6b" stroke-width="1" stroke-linejoin="miter"><rect x="10.2" y="5.8" width="10.2" height="9.8" stroke-dasharray="1 1"/><path d="M9.3 9.4H5.2V17.2L9.6 19.4" /><path d="M9.3 5.8V15.6" /></g></svg>
<svg style="left:611px;top:842px" width="24" height="24" viewBox="0 0 24 24"><g fill="none" stroke="#6b6b6b" stroke-width="1" stroke-linejoin="miter"><rect x="9.6" y="5.8" width="10.799999999999999" height="9.8" stroke-dasharray="1 1"/><path d="M9.6 10.6L2.8 18.2" stroke-width="1.2"/></g></svg>
<svg style="left:635px;top:842px" width="24" height="24" viewBox="0 0 24 24"><g fill="none" stroke="#6b6b6b" stroke-width="1" stroke-linejoin="miter"><rect x="9.6" y="5.8" width="10.799999999999999" height="9.8" stroke-dasharray="1 1"/><path d="M9.6 9.6H7.2L4.2 19.2" stroke-width="1.2"/></g></svg>
<svg style="left:371px;top:866px" width="24" height="24" viewBox="0 0 24 24"><g fill="none" stroke="#6b6b6b" stroke-width="1" stroke-linejoin="miter"><rect x="9.6" y="5.8" width="10.799999999999999" height="9.8" stroke-dasharray="1 1"/><path d="M9.6 9.4H5.2V17.2L9.6 19.4" /></g></svg>
<svg style="left:395px;top:866px" width="24" height="24" viewBox="0 0 24 24"><g fill="none" stroke="#6b6b6b" stroke-width="1" stroke-linejoin="miter"><rect x="12" y="5.8" width="8.399999999999999" height="9.8"/><path d="M10.1 10.6L2.8 18.2" stroke-width="1.2"/><path d="M10.1 5.8V15.6" /></g></svg>
<svg style="left:419px;top:866px" width="24" height="24" viewBox="0 0 24 24"><g fill="none" stroke="#6b6b6b" stroke-width="1" stroke-linejoin="miter"><rect x="12" y="5.8" width="8.399999999999999" height="9.8"/><path d="M10.1 9.6H7.2L4.2 19.2" stroke-width="1.2"/><path d="M10.1 5.8V15.6" /></g></svg>
<svg style="left:443px;top:866px" width="24" height="24" viewBox="0 0 24 24"><g fill="none" stroke="#6b6b6b" stroke-width="1" stroke-linejoin="miter"><rect x="12" y="5.8" width="8.399999999999999" height="9.8"/><path d="M10.1 9.4H5.2V17.2L9.6 19.4" /><path d="M10.1 5.8V15.6" /></g></svg>
<svg style="left:371px;top:917px" width="24" height="24" viewBox="0 0 24 24"><g fill="none" stroke="#6b6b6b" stroke-width="1" stroke-linejoin="miter"><rect x="2.2" y="4.2" width="19.6" height="19.4"/><path d="M16 8.4V18.6L6.8 13.5Z" /></g></svg>
<svg style="left:395px;top:917px" width="24" height="24" viewBox="0 0 24 24"><g fill="none" stroke="#6b6b6b" stroke-width="1" stroke-linejoin="miter"><rect x="2.2" y="4.2" width="19.6" height="19.4"/><path d="M8.2 8.4V18.6L17.4 13.5Z" /></g></svg>
<svg style="left:419px;top:917px" width="24" height="24" viewBox="0 0 24 24"><g fill="none" stroke="#6b6b6b" stroke-width="1" stroke-linejoin="miter"><rect x="2.2" y="4.2" width="19.6" height="19.4"/><path d="M17.4 8.4V18.6L8.6 13.5ZM7.2 8.4V18.6" /></g></svg>
<svg style="left:443px;top:917px" width="24" height="24" viewBox="0 0 24 24"><g fill="none" stroke="#6b6b6b" stroke-width="1" stroke-linejoin="miter"><rect x="2.2" y="4.2" width="19.6" height="19.4"/><path d="M6.8 8.4V18.6L15.6 13.5ZM17 8.4V18.6" /></g></svg>
<svg style="left:467px;top:917px" width="24" height="24" viewBox="0 0 24 24"><g fill="none" stroke="#6b6b6b" stroke-width="1" stroke-linejoin="miter"><rect x="2.2" y="4.2" width="19.6" height="19.4"/><path d="M6.6 13.4L12.1 8.4L17.6 13.4H16.4V19.4H7.8V13.4ZM14.6 10.6V8.6H16.2V12M10.8 19.4V15.6H13.4V19.4" stroke-width="1.2"/></g></svg>
<svg style="left:491px;top:917px" width="24" height="24" viewBox="0 0 24 24"><g fill="none" stroke="#6b6b6b" stroke-width="1" stroke-linejoin="miter"><rect x="2.2" y="4.2" width="19.6" height="19.4"/><circle cx="12.1" cy="13.5" r="6"/><text x="12.1" y="16.6" font-size="9" text-anchor="middle" fill="#555" stroke="none" font-weight="bold" font-family="'Liberation Serif',serif">i</text></g></svg>
<svg style="left:515px;top:917px" width="24" height="24" viewBox="0 0 24 24"><g fill="none" stroke="#6b6b6b" stroke-width="1" stroke-linejoin="miter"><rect x="2.2" y="4.2" width="19.6" height="19.4"/><path d="M7 11V14.4A3.6 3.6 0 0 0 14.2 14.4V11.4H16.6L13.2 7.6L9.8 11.4H12V14.4A1.4 1.4 0 0 1 9.2 14.4V11Z" stroke-width="1.1"/></g></svg>
<svg style="left:539px;top:917px" width="24" height="24" viewBox="0 0 24 24"><g fill="none" stroke="#6b6b6b" stroke-width="1" stroke-linejoin="miter"><rect x="2.2" y="4.2" width="19.6" height="19.4"/><path d="M6.4 10.6H7.4M7.4 10.6H14.6V12H16.2L17.6 10.8V16.4L16.2 15.2H14.6V16.4H8.2V12.2H6.4Z" stroke-width="1.2"/></g></svg>
<svg style="left:563px;top:917px" width="24" height="24" viewBox="0 0 24 24"><g fill="none" stroke="#6b6b6b" stroke-width="1" stroke-linejoin="miter"><rect x="3.2" y="5.6" width="17.2" height="16.8"/><path d="M8 8.4H13.2L16 11.2V19.6H8ZM13.2 8.4V11.2H16" /></g></svg>
<svg style="left:587px;top:917px" width="24" height="24" viewBox="0 0 24 24"><g fill="none" stroke="#6b6b6b" stroke-width="1" stroke-linejoin="miter"><rect x="3.2" y="5.6" width="17.2" height="16.8"/><path d="M6.2 12.2H8.6L12 9.2V18.8L8.6 15.8H6.2ZM14 12L16.2 10.6M14 14H16.6M14 16L16.2 17.4" /></g></svg>
<svg style="left:611px;top:917px" width="24" height="24" viewBox="0 0 24 24"><g fill="none" stroke="#6b6b6b" stroke-width="1" stroke-linejoin="miter"><rect x="3.2" y="5.6" width="17.2" height="16.8"/><text x="12.1" y="17.6" font-size="11.5" text-anchor="middle" fill="#555" stroke="none" font-weight="bold" font-family="'Liberation Sans',sans-serif">?</text></g></svg>
<svg style="left:635px;top:917px" width="24" height="24" viewBox="0 0 24 24"><g fill="none" stroke="#6b6b6b" stroke-width="1" stroke-linejoin="miter"><rect x="3.2" y="5.6" width="17.2" height="16.8"/></g></svg>
<div style="left:0px;top:993px;width:1918px;height:25px;background:#f3f3f3;"></div>
<div style="left:0px;top:993px;width:1918px;height:1px;background:#cdcdcd;"></div>
<span style="left:14.00px;top:1000.66px;font-size:13.4px;color:#444;letter-spacing:-0.113px;">Slide 2 of 8</span>
<svg style="left:103px;top:998px;" width="20" height="17" viewBox="0 0 20 17"><g fill="none" stroke="#666" stroke-width="1"><path d="M9.4 2.2V14.6L7 12.6H1.2V1H8.2Z"/><path d="M9.4 2.2L10.6 1H17.8V12.6H11.8L9.4 14.6"/><path d="M11.6 7.4L13.4 9.6L16.6 4.8"/></g></svg>
<span style="left:143.00px;top:1000.66px;font-size:13.4px;color:#444;letter-spacing:-0.354px;">English (India)</span>
<svg style="left:244px;top:996px;" width="22" height="21" viewBox="0 0 22 21"><g fill="none" stroke="#444" stroke-width="1.3"><path d="M5.6 2.2A8 8 0 0 0 5 16.2" stroke-dasharray="3.2 1.6"/><path d="M8.4 1.6V10.6M5.4 7.8L8.4 10.8L11.4 7.8"/><path d="M13.6 5.2v4M11.6 7.2h4" stroke-width="1"/><path d="M10.4 12L18.6 20M18.6 12L10.4 20" stroke-width="1.7"/></g></svg>
<span style="left:267.00px;top:1000.83px;font-size:13.2px;color:#262626;letter-spacing:-0.229px;font-weight:bold;">Accessibility: Investigate</span>
<svg style="left:1287px;top:998.6px;" width="15" height="16" viewBox="0 0 15 16"><g stroke="#555" stroke-width="1.1"><path d="M1 7.6h12.6M1 10.4h12.6M1 13.2h9"/></g><path d="M7.2 0.8L10.8 5H3.6Z" fill="#555"/></svg>
<span style="left:1307.40px;top:1000.66px;font-size:13.4px;color:#444;letter-spacing:-0.226px;">Notes</span>
<svg style="left:1366px;top:998px;" width="20" height="19" viewBox="0 0 20 19"><path d="M2.4 1.6H16.8Q18 1.6 18 2.8V10.4Q18 11.6 16.8 11.6H8.4L5 15.4V11.6H2.4Q1.2 11.6 1.2 10.4V2.8Q1.2 1.6 2.4 1.6Z" fill="#5a5a5a" stroke="#5a5a5a" stroke-width="1"/></svg>
<span style="left:1388.30px;top:1000.66px;font-size:13.4px;color:#444;letter-spacing:-0.483px;">Comments</span>
<div style="left:1474.4px;top:993px;width:49.4px;height:25px;background:#c8c8c8;"></div>
<svg style="left:1490px;top:999px;" width="19" height="16" viewBox="0 0 19 16"><g fill="none" stroke="#666" stroke-width="1.1"><rect x="0.8" y="0.8" width="16.6" height="14"/><path d="M4.6 0.8V14.8M4.6 11.2H17.4"/><rect x="7.2" y="3.2" width="7.6" height="5"/></g></svg>
<svg style="left:1539px;top:999px;" width="18" height="16" viewBox="0 0 18 16"><g fill="none" stroke="#666" stroke-width="1.1"><rect x="0.8" y="0.8" width="6" height="4.8"/><rect x="10" y="0.8" width="6" height="4.8"/><rect x="0.8" y="9.4" width="6" height="4.8"/><rect x="10" y="9.4" width="6" height="4.8"/></g></svg>
<svg style="left:1589px;top:998px;" width="19" height="17" viewBox="0 0 19 17"><g fill="none" stroke="#666" stroke-width="1"><path d="M9.2 2.6V14.4M9.2 2.6L8 1.4H0.8V13H8L9.2 14.4L10.4 13H17.6V1.4H10.4Z"/><path d="M2.6 4h4.2M2.6 6.4h4.2M2.6 8.8h4.2M11.6 4h4.2M11.6 6.4h4.2M11.6 8.8h4.2" stroke-width="0.8"/><path d="M7.6 14.2L9.2 16L10.8 14.2"/></g></svg>
<svg style="left:1639px;top:998px;" width="19" height="17" viewBox="0 0 19 17"><g fill="none" stroke="#666" stroke-width="1.1"><path d="M0.6 1.2H17.6"/><path d="M2.4 1.4V9.6H15.8V1.4"/><path d="M9.1 9.6V15.4M5.6 15.6H12.6"/></g></svg>
<div style="left:1681px;top:1006px;width:9.5px;height:1.2px;background:#444;"></div>
<div style="left:1696.8px;top:1006.7px;width:124.7px;height:1px;background:#555;"></div>
<div style="left:1744px;top:1000px;width:5.6px;height:13.8px;background:#444;"></div>
<div style="left:1759px;top:1003.6px;width:1px;height:7.4px;background:#555;"></div>
<div style="left:1827.8px;top:1006px;width:9.6px;height:1.2px;background:#444;"></div>
<div style="left:1832px;top:1001.8px;width:1.2px;height:9.6px;background:#444;"></div>
<span style="left:1853.30px;top:1000.66px;font-size:13.4px;color:#444;letter-spacing:-1.560px;">81%</span>
<svg style="left:1896px;top:999px;" width="15" height="15" viewBox="0 0 15 15"><g fill="none" stroke="#777" stroke-width="1"><rect x="1.5" y="1.5" width="12" height="12"/><path d="M7.5 3v2.6M7.5 9.4V12M3 7.5h2.6M9.4 7.5H12" stroke-width="0.9"/><path d="M6.4 4.6L7.5 5.8L8.6 4.6M6.4 10.4L7.5 9.2L8.6 10.4M4.6 6.4L5.8 7.5L4.6 8.6M10.4 6.4L9.2 7.5L10.4 8.6" stroke-width="0.8"/></g></svg>
</div></body></html>
